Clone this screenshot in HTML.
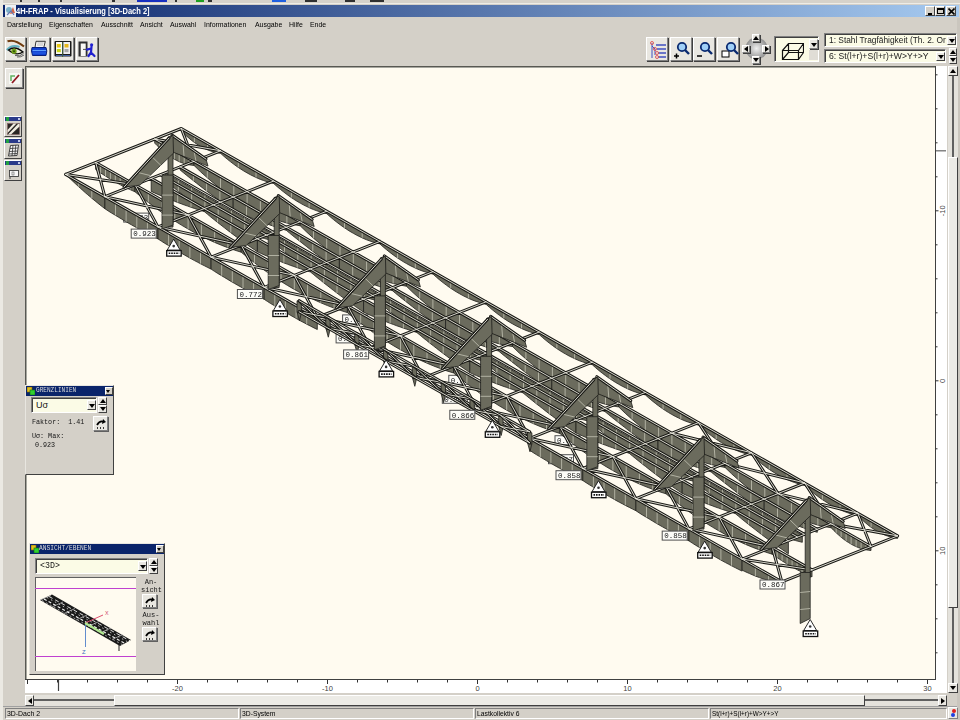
<!DOCTYPE html>
<html><head><meta charset="utf-8">
<style>
*{margin:0;padding:0;box-sizing:border-box}
html,body{width:960px;height:720px;overflow:hidden;background:#d4d0c8;font-family:"Liberation Sans",sans-serif;position:relative}
.a{position:absolute}
.sx{transform-origin:0 0;white-space:nowrap;filter:grayscale(1)}
#title{left:3px;top:5px;width:956px;height:12px;background:linear-gradient(to right,#0a246a 0%,#a6caf0 100%)}
#title .t{left:13px;top:0px;color:#fff;font-weight:bold;font-size:8.5px;line-height:12px;transform:scaleX(0.88)}
.wb{width:10px;height:10px;top:1px;background:#d4d0c8;border:1px solid;border-color:#fff #404040 #404040 #fff}
.menu{top:19px;font-size:8px;line-height:12px;color:#000;transform:scaleX(0.865)}
.btn{background:#e9e7e1;border:1px solid;border-color:#fff #808080 #808080 #fff;box-shadow:1px 1px 0 #404040}
.sunk{border:1px solid;border-color:#808080 #fff #fff #808080;box-shadow:inset 1px 1px 0 #404040}
#canvas{left:25px;top:66px;width:911px;height:614px;background:#fffbf0;border-top:1px solid;border-left:1px solid;border-color:#585852;overflow:hidden;box-shadow:inset 1px 1px 0 #a8a8a0}
.mono{filter:grayscale(1);font-family:"Liberation Mono",monospace}
.panel{background:#d4d0c8;border:1px solid;border-color:#e8e6e0 #404040 #404040 #e8e6e0}
.ptitle{background:#0a246a;color:#d8dce8;font-family:"Liberation Mono",monospace;font-size:7px;line-height:9px}
.arr{width:0;height:0;border-left:3px solid transparent;border-right:3px solid transparent}
.dn{border-top:4px solid #000}
.up{border-bottom:4px solid #000}
.lt{border:0;border-top:3px solid transparent;border-bottom:3px solid transparent;border-right:4px solid #000}
.rt{border:0;border-top:3px solid transparent;border-bottom:3px solid transparent;border-left:4px solid #000}
.stat{filter:grayscale(1);top:708px;height:11px;border:1px solid;border-color:#808080 #fff #fff #808080;font-size:7.5px;line-height:9px;color:#000;padding-left:1px}
</style></head><body>
<!-- top remnants -->
<div class="a" style="left:0;top:0;width:960px;height:4px;background:#d6d2ca"></div>
<div class="a" style="left:0;top:3px;width:960px;height:1px;background:#eeece6"></div>
<div class="a" style="left:0;top:0;width:3px;height:720px;background:#ebe9e3"></div>
<div class="a" style="left:957px;top:18px;width:3px;height:702px;background:#cac6be"></div>
<svg class="a" style="left:0;top:0" width="960" height="2">
  <g fill="#303030"><rect x="20" y="0" width="2" height="2"/><rect x="38" y="0" width="2" height="2"/><rect x="60" y="0" width="2" height="2"/><rect x="112" y="0" width="3" height="2"/><rect x="175" y="0" width="2" height="2"/><rect x="208" y="0" width="4" height="2"/><rect x="305" y="0" width="12" height="2"/><rect x="345" y="0" width="10" height="2"/><rect x="370" y="0" width="14" height="2"/></g>
  <rect x="137" y="0" width="30" height="2" fill="#1830c0"/><rect x="196" y="0" width="8" height="2" fill="#20a020"/><rect x="272" y="0" width="14" height="2" fill="#2060e0"/>
</svg>

<div id="title" class="a">
  <svg class="a" style="left:2px;top:0" width="11" height="12"><rect x="0" y="0" width="11" height="12" fill="#eef2f6"/><circle cx="4" cy="5" r="3" fill="#7ab0c8"/><path d="M5 9 L8 2 L10 8 Z" fill="#d86848"/><path d="M2 10 L6 6 L9 10" stroke="#6878b0" stroke-width="1.2" fill="none"/></svg>
  <div class="a t sx">4H-FRAP - Visualisierung [3D-Dach 2]</div>
  <div class="a wb" style="left:922px"><div class="a" style="left:2px;top:6px;width:4px;height:2px;background:#000"></div></div>
  <div class="a wb" style="left:932px"><div class="a" style="left:1px;top:1px;width:7px;height:6px;border:1px solid #000;border-top-width:2px"></div></div>
  <div class="a wb" style="left:943px"><svg class="a" style="left:1px;top:1px" width="7" height="7"><path d="M0.5 0.5 L6.5 6.5 M6.5 0.5 L0.5 6.5" stroke="#000" stroke-width="1.6"/></svg></div>
</div>

<div class="a menu sx" style="left:7px">Darstellung</div>
<div class="a menu sx" style="left:49px">Eigenschaften</div>
<div class="a menu sx" style="left:101px">Ausschnitt</div>
<div class="a menu sx" style="left:140px">Ansicht</div>
<div class="a menu sx" style="left:170px">Auswahl</div>
<div class="a menu sx" style="left:204px">Informationen</div>
<div class="a menu sx" style="left:255px">Ausgabe</div>
<div class="a menu sx" style="left:289px">Hilfe</div>
<div class="a menu sx" style="left:310px">Ende</div>

<!-- left toolbar buttons -->
<div class="a btn" style="left:5px;top:37px;width:21px;height:24px">
  <svg class="a" style="left:0px;top:0px" width="20" height="22"><path d="M1.5 3.2 Q9 0.8 18 8.6" stroke="#703c10" stroke-width="2" fill="none"/><path d="M0.8 12 Q6 6 13.5 9" stroke="#60b0c0" stroke-width="2.2" fill="none"/><path d="M2.5 12 Q9 7 17 14 Q10 18.5 2.5 12Z" fill="#f0f0dc" stroke="#0a0a0a" stroke-width="1.4"/><circle cx="8" cy="13.2" r="2.6" fill="#70a018"/><circle cx="8" cy="13.2" r="1" fill="#305008"/><path d="M9 17.5 Q14 19 17.5 15.5 M11 19 Q15 19.5 18 17" stroke="#505050" stroke-width="0.9" fill="none"/></svg>
</div>
<div class="a btn" style="left:29px;top:37px;width:21px;height:24px">
  <svg class="a" style="left:0px;top:0px" width="20" height="22"><path d="M6 3.3 L15.3 3.3 L13.8 9.5 L5 9.5Z" fill="#f6f6f6" stroke="#202020" stroke-width="0.9"/><path d="M7.5 5 L13.5 5 M7 7 L13 7" stroke="#909090" stroke-width="0.6"/><path d="M2 9.5 L16 9.5 L16.8 13 L16 17.5 L2.5 17.5 L1.5 13Z" fill="#1040d0" stroke="#08207a" stroke-width="1"/><path d="M2.5 12.5 L16 12.5" stroke="#60a0ff" stroke-width="1.1"/><path d="M2.5 15 L16 15" stroke="#3070f0" stroke-width="0.8"/></svg>
</div>
<div class="a btn" style="left:52px;top:37px;width:22px;height:24px">
  <svg class="a" style="left:0px;top:0px" width="21" height="22"><rect x="1.5" y="3" width="17" height="15.5" rx="1" fill="#1a1a1a"/><rect x="3" y="4" width="6" height="12" fill="#fafaf4"/><rect x="10.3" y="4" width="6.7" height="12" fill="#f0f0f0"/><rect x="3.8" y="6" width="4" height="3.5" fill="#e8c810"/><rect x="3.8" y="11" width="4" height="3.2" fill="#c8d418"/><rect x="11.5" y="6" width="4" height="3.5" fill="#e8b818"/><rect x="11.5" y="11" width="4" height="3.2" fill="#a8a8a8"/><path d="M3 17.5 H17" stroke="#4060a0" stroke-width="1"/><path d="M9.6 4 V19" stroke="#406040" stroke-width="1"/></svg>
</div>
<div class="a btn" style="left:76px;top:37px;width:22px;height:24px">
  <svg class="a" style="left:0px;top:0px" width="21" height="22"><rect x="1.5" y="3.5" width="9" height="15" fill="#303030"/><rect x="3.7" y="5.5" width="5" height="12.5" fill="#f8f8f4"/><path d="M6 11.4 H12" stroke="#404040" stroke-width="0.9"/><circle cx="14.6" cy="6.8" r="1.6" fill="#2020d0"/><path d="M14.5 8.5 L14 14.5 L11.5 18 M14 14.5 L17.5 18 M14.3 10.5 L10 11.6" stroke="#2020d0" stroke-width="2.2" fill="none" stroke-linecap="round"/></svg>
</div>

<!-- right toolbar -->
<div class="a btn" style="left:646px;top:37px;width:22px;height:24px">
  <svg class="a" style="left:1px;top:1px" width="20" height="21"><path d="M4 4 L4 19 M4 7 L7 10 L7 16" stroke="#4050c0" stroke-width="1" fill="none"/><g stroke="#4050c0" stroke-width="1.4"><path d="M8 6 L18 6 M9 10 L18 10 M10 14 L18 14 M10 18 L18 18"/></g><g fill="none" stroke="#e05050" stroke-width="0.9"><circle cx="4" cy="4" r="1.5"/><circle cx="7" cy="10" r="1.5"/><circle cx="9" cy="14" r="1.5"/><circle cx="9" cy="18" r="1.5"/></g></svg>
</div>
<div class="a btn" style="left:670px;top:37px;width:22px;height:24px">
  <svg class="a" style="left:1px;top:1px" width="20" height="21"><circle cx="10" cy="8" r="4.2" fill="#a0d0f8" stroke="#0a2a70" stroke-width="1.8"/><path d="M13 11 L17 15" stroke="#0a2a70" stroke-width="2.4"/><path d="M2 17 L7 17 M4.5 14.5 L4.5 19.5" stroke="#000" stroke-width="1.5"/></svg>
</div>
<div class="a btn" style="left:693px;top:37px;width:22px;height:24px">
  <svg class="a" style="left:1px;top:1px" width="20" height="21"><circle cx="10" cy="8" r="4.2" fill="#a0d0f8" stroke="#0a2a70" stroke-width="1.8"/><path d="M13 11 L17 15" stroke="#0a2a70" stroke-width="2.4"/><path d="M2 17 L7 17" stroke="#000" stroke-width="1.5"/></svg>
</div>
<div class="a btn" style="left:717px;top:37px;width:22px;height:24px">
  <svg class="a" style="left:1px;top:1px" width="20" height="21"><rect x="3" y="12" width="7" height="6" fill="#fff" stroke="#000" stroke-width="1"/><circle cx="12" cy="8" r="4.2" fill="#a0d0f8" stroke="#0a2a70" stroke-width="1.8"/><path d="M15 11 L19 15" stroke="#0a2a70" stroke-width="2.4"/></svg>
</div>
<!-- direction pad -->
<svg class="a" style="left:742px;top:33px" width="29" height="32">
  <defs><radialGradient id="pg" cx="0.5" cy="0.5" r="0.5"><stop offset="0" stop-color="#f0f0f0"/><stop offset="1" stop-color="#909090"/></radialGradient></defs>
  <circle cx="14.5" cy="15.5" r="11" fill="url(#pg)"/>
</svg>
<div class="a btn" style="left:752px;top:34px;width:8px;height:8px"><div class="a arr up" style="left:0px;top:1px;border-left-width:3px;border-right-width:3px"></div></div>
<div class="a btn" style="left:752px;top:56px;width:8px;height:8px"><div class="a arr dn" style="left:0px;top:1px"></div></div>
<div class="a btn" style="left:742px;top:45px;width:8px;height:8px"><div class="a arr lt" style="left:1px;top:0px"></div></div>
<div class="a btn" style="left:762px;top:45px;width:8px;height:8px"><div class="a arr rt" style="left:2px;top:0px"></div></div>
<!-- cube box -->
<div class="a sunk" style="left:774px;top:36px;width:45px;height:26px;background:#fbfbe6">
  <svg class="a" style="left:5px;top:3px" width="24" height="20"><path d="M2.5 10.5 L18.5 10.5 L18.5 19.5 L2.5 19.5 Z M2.5 10.5 L8.5 3.5 L23.5 3.5 L18.5 10.5 M23.5 3.5 L23.5 12.5 L18.5 19.5 M8.5 3.5 L8.5 12.5 L2.5 19.5 M8.5 12.5 L23.5 12.5" stroke="#111" stroke-width="1.2" fill="none"/></svg>
  <div class="a btn" style="left:34px;top:2px;width:9px;height:10px"><div class="a arr dn" style="left:1px;top:3px"></div></div>
  <div class="a" style="left:34px;top:13px;width:9px;height:10px;background:#e0ddd6"></div>
</div>
<!-- dropdowns -->
<div class="a sunk" style="left:824px;top:33px;width:133px;height:14px;background:#fbfbe6;overflow:hidden">
  <div class="a sx" style="left:4px;top:0px;font-size:9px;line-height:12px;color:#222;transform:scaleX(0.93)">1: Stahl Tragfähigkeit (Th. 2. Or</div>
  <div class="a btn" style="left:122px;top:2px;width:9px;height:9px;box-shadow:none;border-right-color:#404040;border-bottom-color:#404040"><div class="a arr dn" style="left:1px;top:2px"></div></div>
</div>
<div class="a sunk" style="left:824px;top:49px;width:122px;height:14px;background:#fbfbe6">
  <div class="a sx" style="left:4px;top:0px;font-size:9px;line-height:12px;color:#222;transform:scaleX(0.96)">6: St(l+r)+S(l+r)+W&gt;Y+&gt;Y</div>
  <div class="a btn" style="left:111px;top:2px;width:9px;height:9px;box-shadow:none;border-right-color:#404040;border-bottom-color:#404040"><div class="a arr dn" style="left:1px;top:2px"></div></div>
</div>
<div class="a btn" style="left:949px;top:48px;width:8px;height:8px;box-shadow:none;border-right-color:#404040;border-bottom-color:#404040"><div class="a arr up" style="left:0px;top:1px"></div></div>
<div class="a btn" style="left:949px;top:56px;width:8px;height:8px;box-shadow:none;border-right-color:#404040;border-bottom-color:#404040"><div class="a arr dn" style="left:0px;top:1px"></div></div>

<!-- left vertical toolbar -->
<div class="a btn" style="left:5px;top:68px;width:18px;height:20px">
  <svg class="a" style="left:1px;top:1px" width="15" height="17"><rect x="2" y="3" width="11" height="11" fill="#f6f8f4"/><path d="M4 11 L4 6 L8 6" stroke="#60b060" stroke-width="1.5" fill="none"/><path d="M5 13 L12 5" stroke="#901820" stroke-width="1.8"/></svg>
</div>
<div class="a" style="left:4px;top:116px;width:18px;height:21px;background:#d4d0c8;border:1px solid;border-color:#fff #404040 #404040 #fff">
  <div class="a" style="left:0;top:0;width:16px;height:4px;background:#2a3a8a"></div><div class="a" style="left:1px;top:0;width:3px;height:4px;background:#20a040"></div><div class="a" style="left:13px;top:1px;width:2px;height:2px;background:#c0c8e8"></div>
  <svg class="a" style="left:2px;top:6px" width="13" height="12"><rect x="0.5" y="0.5" width="12" height="11" fill="#2a2624" stroke="#806060" stroke-width="0.6"/><path d="M1 11.5 L11 1 L12.5 1 L12.5 3.5 L4 11.5Z M0.5 7 L6.5 0.5 L9.5 0.5 L0.5 10Z" fill="#f0ece0"/></svg>
</div>
<div class="a" style="left:4px;top:138px;width:18px;height:21px;background:#d4d0c8;border:1px solid;border-color:#fff #404040 #404040 #fff">
  <div class="a" style="left:0;top:0;width:16px;height:4px;background:#2a3a8a"></div><div class="a" style="left:1px;top:0;width:3px;height:4px;background:#20a040"></div><div class="a" style="left:13px;top:1px;width:2px;height:2px;background:#c0c8e8"></div>
  <svg class="a" style="left:2px;top:5px" width="13" height="13"><path d="M3.5 1.5 L11.5 1 L10 11.5 L1.5 12Z" fill="#fafafa" stroke="#303030" stroke-width="0.9"/><path d="M3 4.5 L11 4 M2.5 7.5 L10.5 7 M2 10 L10 9.5 M6 1.2 L5 12 M8.8 1.1 L7.8 11.8" stroke="#303030" stroke-width="0.8"/></svg>
</div>
<div class="a" style="left:4px;top:160px;width:18px;height:21px;background:#d4d0c8;border:1px solid;border-color:#fff #404040 #404040 #fff">
  <div class="a" style="left:0;top:0;width:16px;height:4px;background:#2a3a8a"></div><div class="a" style="left:1px;top:0;width:3px;height:4px;background:#20a040"></div><div class="a" style="left:13px;top:1px;width:2px;height:2px;background:#c0c8e8"></div>
  <svg class="a" style="left:2px;top:6px" width="13" height="12"><rect x="2.5" y="3.5" width="9" height="6" fill="#f8f8f8" stroke="#404040" stroke-width="0.9"/><path d="M3 10 L3 12" stroke="#404040"/><rect x="5" y="5" width="2" height="3" fill="none" stroke="#606060" stroke-width="0.6"/></svg>
</div>

<div id="canvas" class="a"><svg class="a" style="left:-26px;top:-67px" width="960" height="720"><style>#tr polygon{fill:#6b6b5d;stroke:#1e1e1a;stroke-width:0.8;stroke-linejoin:round} #tr .h{stroke:#d0d0c0;stroke-width:0.7;fill:none} #tr .mo{stroke:#1a1a16;stroke-width:3.0;fill:none;stroke-linecap:round} #tr .mi{stroke:#ecebe0;stroke-width:0.9;fill:none;stroke-linecap:round} #tr .lt{filter:grayscale(1);font-family:"Liberation Mono",monospace;font-size:7.5px;fill:#1a1a1a}</style><g id="tr">
<rect x="123.7" y="213.1" width="25" height="9" fill="#fcfcf8" stroke="#505050" stroke-width="1"/><text x="125.7" y="220.4" class="lt">0.893</text>
<rect x="342.6" y="314.9" width="25" height="9" fill="#fcfcf8" stroke="#505050" stroke-width="1"/><text x="344.6" y="322.2" class="lt">0.872</text>
<rect x="336.1" y="333.9" width="25" height="9" fill="#fcfcf8" stroke="#505050" stroke-width="1"/><text x="338.1" y="341.2" class="lt">0.871</text>
<rect x="448.8" y="375.3" width="25" height="9" fill="#fcfcf8" stroke="#505050" stroke-width="1"/><text x="450.8" y="382.6" class="lt">0.868</text>
<rect x="442.3" y="394.3" width="25" height="9" fill="#fcfcf8" stroke="#505050" stroke-width="1"/><text x="444.3" y="401.6" class="lt">0.867</text>
<rect x="555.0" y="435.7" width="25" height="9" fill="#fcfcf8" stroke="#505050" stroke-width="1"/><text x="557.0" y="443.0" class="lt">0.892</text>
<rect x="548.5" y="454.7" width="25" height="9" fill="#fcfcf8" stroke="#505050" stroke-width="1"/><text x="550.5" y="462.0" class="lt">0.857</text>
<polygon points="181.3,128.5 183.8,129.9 186.2,131.3 188.7,132.7 191.1,134.1 193.6,135.5 196.0,136.9 198.5,138.3 200.9,139.7 203.4,141.1 205.9,142.5 208.3,143.9 210.8,145.3 213.2,146.7 215.7,148.1 218.1,149.5 220.6,150.8 220.6,153.3 218.1,153.0 215.7,152.5 213.2,151.9 210.8,151.1 208.3,150.2 205.9,149.2 203.4,148.0 200.9,146.7 198.5,145.2 196.0,143.6 193.6,141.9 191.1,140.0 188.7,137.9 186.2,135.8 183.8,133.5 181.3,131.0"/>
<path class="h" d="M194.4,135.9L194.4,142.4 M207.5,143.4L207.5,149.9"/>
<polygon points="220.6,150.8 223.9,152.7 227.2,154.6 230.6,156.5 233.9,158.4 237.2,160.3 240.5,162.2 243.8,164.1 247.1,165.9 250.5,167.8 253.8,169.7 257.1,171.6 260.4,173.5 263.7,175.4 267.1,177.3 270.4,179.2 273.7,181.0 273.7,183.5 270.4,182.7 267.1,181.7 263.7,180.6 260.4,179.4 257.1,178.0 253.8,176.4 250.5,174.8 247.1,172.9 243.8,171.0 240.5,168.9 237.2,166.7 233.9,164.3 230.6,161.8 227.2,159.1 223.9,156.3 220.6,153.3"/>
<path class="h" d="M238.3,160.9L238.3,167.4 M256.0,171.0L256.0,177.5"/>
<polygon points="273.7,181.0 277.0,182.9 280.3,184.8 283.7,186.7 287.0,188.6 290.3,190.5 293.6,192.4 296.9,194.3 300.2,196.1 303.6,198.0 306.9,199.9 310.2,201.8 313.5,203.7 316.8,205.6 320.2,207.5 323.5,209.4 326.8,211.2 326.8,213.7 323.5,212.9 320.2,211.9 316.8,210.8 313.5,209.6 310.2,208.2 306.9,206.6 303.6,205.0 300.2,203.1 296.9,201.2 293.6,199.1 290.3,196.9 287.0,194.5 283.7,192.0 280.3,189.3 277.0,186.5 273.7,183.5"/>
<path class="h" d="M291.4,191.1L291.4,197.6 M309.1,201.2L309.1,207.7"/>
<polygon points="326.8,211.2 330.1,213.1 333.4,215.0 336.8,216.9 340.1,218.8 343.4,220.7 346.7,222.6 350.0,224.5 353.3,226.3 356.7,228.2 360.0,230.1 363.3,232.0 366.6,233.9 369.9,235.8 373.3,237.7 376.6,239.6 379.9,241.4 379.9,243.9 376.6,243.1 373.3,242.1 369.9,241.0 366.6,239.8 363.3,238.4 360.0,236.8 356.7,235.2 353.3,233.3 350.0,231.4 346.7,229.3 343.4,227.1 340.1,224.7 336.8,222.2 333.4,219.5 330.1,216.7 326.8,213.7"/>
<path class="h" d="M344.5,221.3L344.5,227.8 M362.2,231.4L362.2,237.9"/>
<polygon points="379.9,241.4 383.2,243.3 386.5,245.2 389.9,247.1 393.2,249.0 396.5,250.9 399.8,252.8 403.1,254.7 406.4,256.5 409.8,258.4 413.1,260.3 416.4,262.2 419.7,264.1 423.0,266.0 426.4,267.9 429.7,269.8 433.0,271.6 433.0,274.1 429.7,273.3 426.4,272.3 423.0,271.2 419.7,270.0 416.4,268.6 413.1,267.0 409.8,265.4 406.4,263.5 403.1,261.6 399.8,259.5 396.5,257.3 393.2,254.9 389.9,252.4 386.5,249.7 383.2,246.9 379.9,243.9"/>
<path class="h" d="M397.6,251.5L397.6,258.0 M415.3,261.6L415.3,268.1"/>
<polygon points="433.0,271.6 436.3,273.5 439.6,275.4 443.0,277.3 446.3,279.2 449.6,281.1 452.9,283.0 456.2,284.9 459.5,286.7 462.9,288.6 466.2,290.5 469.5,292.4 472.8,294.3 476.1,296.2 479.5,298.1 482.8,300.0 486.1,301.8 486.1,304.3 482.8,303.5 479.5,302.5 476.1,301.4 472.8,300.2 469.5,298.8 466.2,297.2 462.9,295.6 459.5,293.7 456.2,291.8 452.9,289.7 449.6,287.5 446.3,285.1 443.0,282.6 439.6,279.9 436.3,277.1 433.0,274.1"/>
<path class="h" d="M450.7,281.7L450.7,288.2 M468.4,291.8L468.4,298.3"/>
<polygon points="486.1,301.8 489.4,303.7 492.7,305.6 496.1,307.5 499.4,309.4 502.7,311.3 506.0,313.2 509.3,315.1 512.6,316.9 516.0,318.8 519.3,320.7 522.6,322.6 525.9,324.5 529.2,326.4 532.6,328.3 535.9,330.2 539.2,332.0 539.2,334.5 535.9,333.7 532.6,332.7 529.2,331.6 525.9,330.4 522.6,329.0 519.3,327.4 516.0,325.8 512.6,323.9 509.3,322.0 506.0,319.9 502.7,317.7 499.4,315.3 496.1,312.8 492.7,310.1 489.4,307.3 486.1,304.3"/>
<path class="h" d="M503.8,311.9L503.8,318.4 M521.5,322.0L521.5,328.5"/>
<polygon points="539.2,332.0 542.5,333.9 545.8,335.8 549.2,337.7 552.5,339.6 555.8,341.5 559.1,343.4 562.4,345.3 565.7,347.1 569.1,349.0 572.4,350.9 575.7,352.8 579.0,354.7 582.3,356.6 585.7,358.5 589.0,360.4 592.3,362.2 592.3,364.7 589.0,363.9 585.7,362.9 582.3,361.8 579.0,360.6 575.7,359.2 572.4,357.6 569.1,356.0 565.7,354.1 562.4,352.2 559.1,350.1 555.8,347.9 552.5,345.5 549.2,343.0 545.8,340.3 542.5,337.5 539.2,334.5"/>
<path class="h" d="M556.9,342.1L556.9,348.6 M574.6,352.2L574.6,358.7"/>
<polygon points="592.3,362.2 595.6,364.1 598.9,366.0 602.3,367.9 605.6,369.8 608.9,371.7 612.2,373.6 615.5,375.5 618.8,377.3 622.2,379.2 625.5,381.1 628.8,383.0 632.1,384.9 635.4,386.8 638.8,388.7 642.1,390.6 645.4,392.4 645.4,394.9 642.1,394.1 638.8,393.1 635.4,392.0 632.1,390.8 628.8,389.4 625.5,387.8 622.2,386.2 618.8,384.3 615.5,382.4 612.2,380.3 608.9,378.1 605.6,375.7 602.3,373.2 598.9,370.5 595.6,367.7 592.3,364.7"/>
<path class="h" d="M610.0,372.3L610.0,378.8 M627.7,382.4L627.7,388.9"/>
<polygon points="645.4,392.4 648.7,394.3 652.0,396.2 655.4,398.1 658.7,400.0 662.0,401.9 665.3,403.8 668.6,405.7 671.9,407.5 675.3,409.4 678.6,411.3 681.9,413.2 685.2,415.1 688.5,417.0 691.9,418.9 695.2,420.8 698.5,422.6 698.5,425.1 695.2,424.3 691.9,423.3 688.5,422.2 685.2,421.0 681.9,419.6 678.6,418.0 675.3,416.4 671.9,414.5 668.6,412.6 665.3,410.5 662.0,408.3 658.7,405.9 655.4,403.4 652.0,400.7 648.7,397.9 645.4,394.9"/>
<path class="h" d="M663.1,402.5L663.1,409.0 M680.8,412.6L680.8,419.1"/>
<polygon points="698.5,422.6 701.8,424.5 705.1,426.4 708.5,428.3 711.8,430.2 715.1,432.1 718.4,434.0 721.7,435.9 725.0,437.7 728.4,439.6 731.7,441.5 735.0,443.4 738.3,445.3 741.6,447.2 745.0,449.1 748.3,451.0 751.6,452.8 751.6,455.3 748.3,454.5 745.0,453.5 741.6,452.4 738.3,451.2 735.0,449.8 731.7,448.2 728.4,446.6 725.0,444.7 721.7,442.8 718.4,440.7 715.1,438.5 711.8,436.1 708.5,433.6 705.1,430.9 701.8,428.1 698.5,425.1"/>
<path class="h" d="M716.2,432.7L716.2,439.2 M733.9,442.8L733.9,449.3"/>
<polygon points="751.6,452.8 754.9,454.7 758.2,456.6 761.6,458.5 764.9,460.4 768.2,462.3 771.5,464.2 774.8,466.1 778.1,467.9 781.5,469.8 784.8,471.7 788.1,473.6 791.4,475.5 794.7,477.4 798.1,479.3 801.4,481.2 804.7,483.0 804.7,485.5 801.4,484.7 798.1,483.7 794.7,482.6 791.4,481.4 788.1,480.0 784.8,478.4 781.5,476.8 778.1,474.9 774.8,473.0 771.5,470.9 768.2,468.7 764.9,466.3 761.6,463.8 758.2,461.1 754.9,458.3 751.6,455.3"/>
<path class="h" d="M769.3,462.9L769.3,469.4 M787.0,473.0L787.0,479.5"/>
<polygon points="804.7,483.0 808.0,484.9 811.3,486.8 814.7,488.7 818.0,490.6 821.3,492.5 824.6,494.4 827.9,496.3 831.2,498.1 834.6,500.0 837.9,501.9 841.2,503.8 844.5,505.7 847.8,507.6 851.2,509.5 854.5,511.4 857.8,513.2 857.8,515.7 854.5,514.9 851.2,513.9 847.8,512.8 844.5,511.6 841.2,510.2 837.9,508.6 834.6,507.0 831.2,505.1 827.9,503.2 824.6,501.1 821.3,498.9 818.0,496.5 814.7,494.0 811.3,491.3 808.0,488.5 804.7,485.5"/>
<path class="h" d="M822.4,493.1L822.4,499.6 M840.1,503.2L840.1,509.7"/>
<polygon points="857.8,513.2 860.3,514.7 862.8,516.1 865.3,517.5 867.8,518.9 870.2,520.3 872.7,521.7 875.2,523.2 877.7,524.6 880.2,526.0 882.7,527.4 885.2,528.8 887.7,530.2 890.2,531.7 892.6,533.1 895.1,534.5 897.6,535.9 897.6,538.4 895.1,538.0 892.6,537.5 890.2,536.9 887.7,536.1 885.2,535.2 882.7,534.1 880.2,532.9 877.7,531.6 875.2,530.1 872.7,528.5 870.2,526.7 867.8,524.8 865.3,522.7 862.8,520.5 860.3,518.2 857.8,515.7"/>
<path class="h" d="M871.1,520.8L871.1,527.3 M884.3,528.3L884.3,534.8"/>
<polygon points="154.7,139.1 157.1,140.5 159.6,141.9 162.1,143.2 164.5,144.6 167.0,146.0 169.4,147.4 171.9,148.8 174.3,150.2 176.8,151.6 179.2,153.0 181.7,154.4 184.2,155.8 186.6,157.2 189.1,158.6 191.5,160.0 194.0,161.4 194.0,165.4 191.5,165.2 189.1,164.8 186.6,164.3 184.2,163.6 181.7,162.7 179.2,161.7 176.8,160.5 174.3,159.2 171.9,157.8 169.4,156.1 167.0,154.3 164.5,152.4 162.1,150.3 159.6,148.0 157.1,145.6 154.7,143.1"/>
<path class="h" d="M159.6,141.9L159.6,148.0 M164.5,144.6L164.5,152.4 M169.4,147.4L169.4,156.1 M174.3,150.2L174.3,159.2 M179.2,153.0L179.2,161.7 M184.2,155.8L184.2,163.6 M189.1,158.6L189.1,164.8"/>
<polygon points="95.7,162.5 98.1,163.9 100.6,165.3 103.0,166.7 105.5,168.1 108.0,169.4 110.4,170.8 112.9,172.2 115.3,173.6 117.8,175.0 120.2,176.4 122.7,177.8 125.2,179.2 127.6,180.6 130.1,182.0 132.5,183.4 135.0,184.8 135.0,191.8 132.5,190.7 130.1,189.6 127.6,188.5 125.2,187.3 122.7,186.0 120.2,184.7 117.8,183.4 115.3,182.0 112.9,180.6 110.4,179.2 108.0,177.7 105.5,176.1 103.0,174.5 100.6,172.9 98.1,171.2 95.7,169.5"/>
<path class="h" d="M100.6,165.3L100.6,172.9 M105.5,168.1L105.5,176.1 M110.4,170.8L110.4,179.2 M115.3,173.6L115.3,182.0 M120.2,176.4L120.2,184.7 M125.2,179.2L125.2,187.3 M130.1,182.0L130.1,189.6"/>
<polygon points="194.0,161.4 200.6,165.2 207.3,169.0 213.9,172.7 220.5,176.5 227.2,180.3 233.8,184.1 240.4,187.8 247.1,191.6 253.7,195.4 260.4,199.2 267.0,202.9 273.6,206.7 280.3,210.5 286.9,214.3 293.5,218.0 300.2,221.8 300.2,225.8 293.5,224.6 286.9,223.1 280.3,221.2 273.6,219.0 267.0,216.4 260.4,213.5 253.7,210.2 247.1,206.6 240.4,202.7 233.8,198.4 227.2,193.7 220.5,188.8 213.9,183.4 207.3,177.8 200.6,171.8 194.0,165.4"/>
<path class="h" d="M207.3,169.0L207.3,177.8 M220.5,176.5L220.5,188.8 M233.8,184.1L233.8,198.4 M247.1,191.6L247.1,206.6 M260.4,199.2L260.4,213.5 M273.6,206.7L273.6,219.0 M286.9,214.3L286.9,223.1"/>
<polygon points="165.1,172.9 171.7,176.7 178.3,180.4 185.0,184.2 191.6,188.0 198.2,191.8 204.9,195.5 211.5,199.3 218.2,203.1 224.8,206.9 231.4,210.6 238.1,214.4 244.7,218.2 251.3,222.0 258.0,225.7 264.6,229.5 271.3,233.3 271.3,240.3 264.6,238.6 258.0,236.7 251.3,234.4 244.7,231.9 238.1,229.1 231.4,226.1 224.8,222.7 218.2,219.1 211.5,215.2 204.9,211.0 198.2,206.5 191.6,201.7 185.0,196.7 178.3,191.4 171.7,185.8 165.1,179.9"/>
<path class="h" d="M178.3,180.4L178.3,191.4 M191.6,188.0L191.6,201.7 M204.9,195.5L204.9,211.0 M218.2,203.1L218.2,219.1 M231.4,210.6L231.4,226.1 M244.7,218.2L244.7,231.9 M258.0,225.7L258.0,236.7"/>
<polygon points="135.0,184.8 141.6,188.6 148.3,192.4 154.9,196.1 161.5,199.9 168.2,203.7 174.8,207.5 181.4,211.2 188.1,215.0 194.7,218.8 201.4,222.6 208.0,226.3 214.6,230.1 221.3,233.9 227.9,237.7 234.5,241.4 241.2,245.2 241.2,252.2 234.5,250.1 227.9,247.7 221.3,245.2 214.6,242.4 208.0,239.4 201.4,236.1 194.7,232.7 188.1,229.0 181.4,225.1 174.8,221.0 168.2,216.7 161.5,212.2 154.9,207.4 148.3,202.4 141.6,197.2 135.0,191.8"/>
<path class="h" d="M148.3,192.4L148.3,202.4 M161.5,199.9L161.5,212.2 M174.8,207.5L174.8,221.0 M188.1,215.0L188.1,229.0 M201.4,222.6L201.4,236.1 M214.6,230.1L214.6,242.4 M227.9,237.7L227.9,247.7"/>
<polygon points="300.2,221.8 306.8,225.6 313.5,229.4 320.1,233.1 326.7,236.9 333.4,240.7 340.0,244.5 346.6,248.2 353.3,252.0 359.9,255.8 366.6,259.6 373.2,263.3 379.8,267.1 386.5,270.9 393.1,274.7 399.7,278.4 406.4,282.2 406.4,286.2 399.7,285.0 393.1,283.5 386.5,281.6 379.8,279.4 373.2,276.8 366.6,273.9 359.9,270.6 353.3,267.0 346.6,263.1 340.0,258.8 333.4,254.1 326.7,249.2 320.1,243.8 313.5,238.2 306.8,232.2 300.2,225.8"/>
<path class="h" d="M313.5,229.4L313.5,238.2 M326.7,236.9L326.7,249.2 M340.0,244.5L340.0,258.8 M353.3,252.0L353.3,267.0 M366.6,259.6L366.6,273.9 M379.8,267.1L379.8,279.4 M393.1,274.7L393.1,283.5"/>
<polygon points="271.3,233.3 277.9,237.1 284.5,240.8 291.2,244.6 297.8,248.4 304.4,252.2 311.1,255.9 317.7,259.7 324.4,263.5 331.0,267.3 337.6,271.0 344.3,274.8 350.9,278.6 357.5,282.4 364.2,286.1 370.8,289.9 377.5,293.7 377.5,300.7 370.8,299.0 364.2,297.1 357.5,294.8 350.9,292.3 344.3,289.5 337.6,286.5 331.0,283.1 324.4,279.5 317.7,275.6 311.1,271.4 304.4,266.9 297.8,262.1 291.2,257.1 284.5,251.8 277.9,246.2 271.3,240.3"/>
<path class="h" d="M284.5,240.8L284.5,251.8 M297.8,248.4L297.8,262.1 M311.1,255.9L311.1,271.4 M324.4,263.5L324.4,279.5 M337.6,271.0L337.6,286.5 M350.9,278.6L350.9,292.3 M364.2,286.1L364.2,297.1"/>
<polygon points="241.2,245.2 247.8,249.0 254.5,252.8 261.1,256.5 267.7,260.3 274.4,264.1 281.0,267.9 287.6,271.6 294.3,275.4 300.9,279.2 307.6,283.0 314.2,286.7 320.8,290.5 327.5,294.3 334.1,298.1 340.7,301.8 347.4,305.6 347.4,312.6 340.7,310.5 334.1,308.1 327.5,305.6 320.8,302.8 314.2,299.8 307.6,296.5 300.9,293.1 294.3,289.4 287.6,285.5 281.0,281.4 274.4,277.1 267.7,272.6 261.1,267.8 254.5,262.8 247.8,257.6 241.2,252.2"/>
<path class="h" d="M254.5,252.8L254.5,262.8 M267.7,260.3L267.7,272.6 M281.0,267.9L281.0,281.4 M294.3,275.4L294.3,289.4 M307.6,283.0L307.6,296.5 M320.8,290.5L320.8,302.8 M334.1,298.1L334.1,308.1"/>
<polygon points="406.4,282.2 413.0,286.0 419.7,289.8 426.3,293.5 432.9,297.3 439.6,301.1 446.2,304.9 452.8,308.6 459.5,312.4 466.1,316.2 472.8,320.0 479.4,323.7 486.0,327.5 492.7,331.3 499.3,335.1 505.9,338.8 512.6,342.6 512.6,346.6 505.9,345.4 499.3,343.9 492.7,342.0 486.0,339.8 479.4,337.2 472.8,334.3 466.1,331.0 459.5,327.4 452.8,323.5 446.2,319.2 439.6,314.5 432.9,309.6 426.3,304.2 419.7,298.6 413.0,292.6 406.4,286.2"/>
<path class="h" d="M419.7,289.8L419.7,298.6 M432.9,297.3L432.9,309.6 M446.2,304.9L446.2,319.2 M459.5,312.4L459.5,327.4 M472.8,320.0L472.8,334.3 M486.0,327.5L486.0,339.8 M499.3,335.1L499.3,343.9"/>
<polygon points="377.5,293.7 384.1,297.5 390.7,301.2 397.4,305.0 404.0,308.8 410.6,312.6 417.3,316.3 423.9,320.1 430.6,323.9 437.2,327.7 443.8,331.4 450.5,335.2 457.1,339.0 463.7,342.8 470.4,346.5 477.0,350.3 483.7,354.1 483.7,361.1 477.0,359.4 470.4,357.5 463.7,355.2 457.1,352.7 450.5,349.9 443.8,346.9 437.2,343.5 430.6,339.9 423.9,336.0 417.3,331.8 410.6,327.3 404.0,322.5 397.4,317.5 390.7,312.2 384.1,306.6 377.5,300.7"/>
<path class="h" d="M390.7,301.2L390.7,312.2 M404.0,308.8L404.0,322.5 M417.3,316.3L417.3,331.8 M430.6,323.9L430.6,339.9 M443.8,331.4L443.8,346.9 M457.1,339.0L457.1,352.7 M470.4,346.5L470.4,357.5"/>
<polygon points="347.4,305.6 354.0,309.4 360.7,313.2 367.3,316.9 373.9,320.7 380.6,324.5 387.2,328.3 393.8,332.0 400.5,335.8 407.1,339.6 413.8,343.4 420.4,347.1 427.0,350.9 433.7,354.7 440.3,358.5 446.9,362.2 453.6,366.0 453.6,373.0 446.9,370.9 440.3,368.5 433.7,366.0 427.0,363.2 420.4,360.2 413.8,356.9 407.1,353.5 400.5,349.8 393.8,345.9 387.2,341.8 380.6,337.5 373.9,333.0 367.3,328.2 360.7,323.2 354.0,318.0 347.4,312.6"/>
<path class="h" d="M360.7,313.2L360.7,323.2 M373.9,320.7L373.9,333.0 M387.2,328.3L387.2,341.8 M400.5,335.8L400.5,349.8 M413.8,343.4L413.8,356.9 M427.0,350.9L427.0,363.2 M440.3,358.5L440.3,368.5"/>
<polygon points="512.6,342.6 519.2,346.4 525.9,350.2 532.5,353.9 539.1,357.7 545.8,361.5 552.4,365.3 559.0,369.0 565.7,372.8 572.3,376.6 579.0,380.4 585.6,384.1 592.2,387.9 598.9,391.7 605.5,395.5 612.1,399.2 618.8,403.0 618.8,407.0 612.1,405.8 605.5,404.3 598.9,402.4 592.2,400.2 585.6,397.6 579.0,394.7 572.3,391.4 565.7,387.8 559.0,383.9 552.4,379.6 545.8,374.9 539.1,370.0 532.5,364.6 525.9,359.0 519.2,353.0 512.6,346.6"/>
<path class="h" d="M525.9,350.2L525.9,359.0 M539.1,357.7L539.1,370.0 M552.4,365.3L552.4,379.6 M565.7,372.8L565.7,387.8 M579.0,380.4L579.0,394.7 M592.2,387.9L592.2,400.2 M605.5,395.5L605.5,404.3"/>
<polygon points="483.7,354.1 490.3,357.9 496.9,361.6 503.6,365.4 510.2,369.2 516.8,373.0 523.5,376.7 530.1,380.5 536.8,384.3 543.4,388.1 550.0,391.8 556.7,395.6 563.3,399.4 569.9,403.2 576.6,406.9 583.2,410.7 589.9,414.5 589.9,421.5 583.2,419.8 576.6,417.9 569.9,415.6 563.3,413.1 556.7,410.3 550.0,407.3 543.4,403.9 536.8,400.3 530.1,396.4 523.5,392.2 516.8,387.7 510.2,382.9 503.6,377.9 496.9,372.6 490.3,367.0 483.7,361.1"/>
<path class="h" d="M496.9,361.6L496.9,372.6 M510.2,369.2L510.2,382.9 M523.5,376.7L523.5,392.2 M536.8,384.3L536.8,400.3 M550.0,391.8L550.0,407.3 M563.3,399.4L563.3,413.1 M576.6,406.9L576.6,417.9"/>
<polygon points="453.6,366.0 460.2,369.8 466.9,373.6 473.5,377.3 480.1,381.1 486.8,384.9 493.4,388.7 500.0,392.4 506.7,396.2 513.3,400.0 520.0,403.8 526.6,407.5 533.2,411.3 539.9,415.1 546.5,418.9 553.1,422.6 559.8,426.4 559.8,433.4 553.1,431.3 546.5,428.9 539.9,426.4 533.2,423.6 526.6,420.6 520.0,417.3 513.3,413.9 506.7,410.2 500.0,406.3 493.4,402.2 486.8,397.9 480.1,393.4 473.5,388.6 466.9,383.6 460.2,378.4 453.6,373.0"/>
<path class="h" d="M466.9,373.6L466.9,383.6 M480.1,381.1L480.1,393.4 M493.4,388.7L493.4,402.2 M506.7,396.2L506.7,410.2 M520.0,403.8L520.0,417.3 M533.2,411.3L533.2,423.6 M546.5,418.9L546.5,428.9"/>
<polygon points="618.8,403.0 625.4,406.8 632.1,410.6 638.7,414.3 645.3,418.1 652.0,421.9 658.6,425.7 665.2,429.4 671.9,433.2 678.5,437.0 685.2,440.8 691.8,444.5 698.4,448.3 705.1,452.1 711.7,455.9 718.3,459.6 725.0,463.4 725.0,467.4 718.3,466.2 711.7,464.7 705.1,462.8 698.4,460.6 691.8,458.0 685.2,455.1 678.5,451.8 671.9,448.2 665.2,444.3 658.6,440.0 652.0,435.3 645.3,430.4 638.7,425.0 632.1,419.4 625.4,413.4 618.8,407.0"/>
<path class="h" d="M632.1,410.6L632.1,419.4 M645.3,418.1L645.3,430.4 M658.6,425.7L658.6,440.0 M671.9,433.2L671.9,448.2 M685.2,440.8L685.2,455.1 M698.4,448.3L698.4,460.6 M711.7,455.9L711.7,464.7"/>
<polygon points="589.9,414.5 596.5,418.3 603.1,422.0 609.8,425.8 616.4,429.6 623.0,433.4 629.7,437.1 636.3,440.9 643.0,444.7 649.6,448.5 656.2,452.2 662.9,456.0 669.5,459.8 676.1,463.6 682.8,467.3 689.4,471.1 696.1,474.9 696.1,481.9 689.4,480.2 682.8,478.3 676.1,476.0 669.5,473.5 662.9,470.7 656.2,467.7 649.6,464.3 643.0,460.7 636.3,456.8 629.7,452.6 623.0,448.1 616.4,443.3 609.8,438.3 603.1,433.0 596.5,427.4 589.9,421.5"/>
<path class="h" d="M603.1,422.0L603.1,433.0 M616.4,429.6L616.4,443.3 M629.7,437.1L629.7,452.6 M643.0,444.7L643.0,460.7 M656.2,452.2L656.2,467.7 M669.5,459.8L669.5,473.5 M682.8,467.3L682.8,478.3"/>
<polygon points="559.8,426.4 566.4,430.2 573.1,434.0 579.7,437.7 586.3,441.5 593.0,445.3 599.6,449.1 606.2,452.8 612.9,456.6 619.5,460.4 626.2,464.2 632.8,467.9 639.4,471.7 646.1,475.5 652.7,479.3 659.3,483.0 666.0,486.8 666.0,493.8 659.3,491.7 652.7,489.3 646.1,486.8 639.4,484.0 632.8,481.0 626.2,477.7 619.5,474.3 612.9,470.6 606.2,466.7 599.6,462.6 593.0,458.3 586.3,453.8 579.7,449.0 573.1,444.0 566.4,438.8 559.8,433.4"/>
<path class="h" d="M573.1,434.0L573.1,444.0 M586.3,441.5L586.3,453.8 M599.6,449.1L599.6,462.6 M612.9,456.6L612.9,470.6 M626.2,464.2L626.2,477.7 M639.4,471.7L639.4,484.0 M652.7,479.3L652.7,489.3"/>
<polygon points="725.0,463.4 731.6,467.2 738.3,471.0 744.9,474.7 751.5,478.5 758.2,482.3 764.8,486.1 771.4,489.8 778.1,493.6 784.7,497.4 791.4,501.2 798.0,504.9 804.6,508.7 811.3,512.5 817.9,516.3 824.5,520.0 831.2,523.8 831.2,527.8 824.5,526.6 817.9,525.1 811.3,523.2 804.6,521.0 798.0,518.4 791.4,515.5 784.7,512.2 778.1,508.6 771.4,504.7 764.8,500.4 758.2,495.7 751.5,490.8 744.9,485.4 738.3,479.8 731.6,473.8 725.0,467.4"/>
<path class="h" d="M738.3,471.0L738.3,479.8 M751.5,478.5L751.5,490.8 M764.8,486.1L764.8,500.4 M778.1,493.6L778.1,508.6 M791.4,501.2L791.4,515.5 M804.6,508.7L804.6,521.0 M817.9,516.3L817.9,525.1"/>
<polygon points="696.1,474.9 702.7,478.7 709.3,482.4 716.0,486.2 722.6,490.0 729.2,493.8 735.9,497.5 742.5,501.3 749.2,505.1 755.8,508.9 762.4,512.6 769.1,516.4 775.7,520.2 782.3,524.0 789.0,527.7 795.6,531.5 802.3,535.3 802.3,542.3 795.6,540.6 789.0,538.7 782.3,536.4 775.7,533.9 769.1,531.1 762.4,528.1 755.8,524.7 749.2,521.1 742.5,517.2 735.9,513.0 729.2,508.5 722.6,503.7 716.0,498.7 709.3,493.4 702.7,487.8 696.1,481.9"/>
<path class="h" d="M709.3,482.4L709.3,493.4 M722.6,490.0L722.6,503.7 M735.9,497.5L735.9,513.0 M749.2,505.1L749.2,521.1 M762.4,512.6L762.4,528.1 M775.7,520.2L775.7,533.9 M789.0,527.7L789.0,538.7"/>
<polygon points="666.0,486.8 672.6,490.6 679.3,494.4 685.9,498.1 692.5,501.9 699.2,505.7 705.8,509.5 712.4,513.2 719.1,517.0 725.7,520.8 732.4,524.6 739.0,528.3 745.6,532.1 752.3,535.9 758.9,539.7 765.5,543.4 772.2,547.2 772.2,554.2 765.5,552.1 758.9,549.7 752.3,547.2 745.6,544.4 739.0,541.4 732.4,538.1 725.7,534.7 719.1,531.0 712.4,527.1 705.8,523.0 699.2,518.7 692.5,514.2 685.9,509.4 679.3,504.4 672.6,499.2 666.0,493.8"/>
<path class="h" d="M679.3,494.4L679.3,504.4 M692.5,501.9L692.5,514.2 M705.8,509.5L705.8,523.0 M719.1,517.0L719.1,531.0 M732.4,524.6L732.4,538.1 M745.6,532.1L745.6,544.4 M758.9,539.7L758.9,549.7"/>
<polygon points="831.2,523.8 833.7,525.2 836.2,526.6 838.7,528.1 841.1,529.5 843.6,530.9 846.1,532.3 848.6,533.7 851.1,535.1 853.6,536.5 856.1,538.0 858.6,539.4 861.1,540.8 863.5,542.2 866.0,543.6 868.5,545.0 871.0,546.5 871.0,550.5 868.5,550.2 866.0,549.8 863.5,549.3 861.1,548.5 858.6,547.7 856.1,546.6 853.6,545.5 851.1,544.1 848.6,542.6 846.1,541.0 843.6,539.2 841.1,537.2 838.7,535.1 836.2,532.8 833.7,530.4 831.2,527.8"/>
<path class="h" d="M836.2,526.6L836.2,532.8 M841.1,529.5L841.1,537.2 M846.1,532.3L846.1,541.0 M851.1,535.1L851.1,544.1 M856.1,538.0L856.1,546.6 M861.1,540.8L861.1,548.5 M866.0,543.6L866.0,549.8"/>
<polygon points="772.2,547.2 774.7,548.6 777.2,550.0 779.6,551.5 782.1,552.9 784.6,554.3 787.1,555.7 789.6,557.1 792.1,558.5 794.6,560.0 797.1,561.4 799.6,562.8 802.0,564.2 804.5,565.6 807.0,567.0 809.5,568.4 812.0,569.9 812.0,576.9 809.5,575.8 807.0,574.6 804.5,573.5 802.0,572.3 799.6,571.0 797.1,569.7 794.6,568.3 792.1,566.9 789.6,565.5 787.1,564.0 784.6,562.5 782.1,560.9 779.6,559.3 777.2,557.7 774.7,556.0 772.2,554.2"/>
<path class="h" d="M777.2,550.0L777.2,557.7 M782.1,552.9L782.1,560.9 M787.1,555.7L787.1,564.0 M792.1,558.5L792.1,566.9 M797.1,561.4L797.1,569.7 M802.0,564.2L802.0,572.3 M807.0,567.0L807.0,574.6"/>
<polygon points="151.2,178.4 154.5,180.3 157.8,182.2 161.1,184.1 164.4,185.9 167.8,187.8 171.1,189.7 174.4,191.6 177.7,193.5 181.0,195.4 184.4,197.3 187.7,199.2 191.0,201.0 194.3,202.9 197.6,204.8 201.0,206.7 204.3,208.6 204.3,211.6 201.0,210.6 197.6,209.5 194.3,208.4 191.0,207.3 187.7,206.1 184.4,205.0 181.0,203.7 177.7,202.5 174.4,201.2 171.1,199.9 167.8,198.6 164.4,197.2 161.1,195.8 157.8,194.4 154.5,192.9 151.2,191.4"/>
<path class="h" d="M164.4,185.9L164.4,197.2 M177.7,193.5L177.7,202.5 M191.0,201.0L191.0,207.3"/>
<polygon points="180.1,166.9 183.4,168.8 186.7,170.7 190.1,172.6 193.4,174.5 196.7,176.4 200.0,178.2 203.3,180.1 206.6,182.0 210.0,183.9 213.3,185.8 216.6,187.7 219.9,189.6 223.2,191.5 226.6,193.3 229.9,195.2 233.2,197.1 233.2,210.1 229.9,207.8 226.6,205.5 223.2,203.2 219.9,200.8 216.6,198.4 213.3,196.0 210.0,193.5 206.6,191.0 203.3,188.5 200.0,185.9 196.7,183.3 193.4,180.7 190.1,178.1 186.7,175.4 183.4,172.7 180.1,169.9"/>
<path class="h" d="M193.4,174.5L193.4,180.7 M206.6,182.0L206.6,191.0 M219.9,189.6L219.9,200.8"/>
<polygon points="204.3,208.6 207.6,210.5 210.9,212.4 214.2,214.3 217.5,216.1 220.9,218.0 224.2,219.9 227.5,221.8 230.8,223.7 234.1,225.6 237.5,227.5 240.8,229.4 244.1,231.2 247.4,233.1 250.7,235.0 254.1,236.9 257.4,238.8 257.4,251.8 254.1,249.5 250.7,247.2 247.4,244.9 244.1,242.5 240.8,240.1 237.5,237.7 234.1,235.2 230.8,232.7 227.5,230.2 224.2,227.6 220.9,225.0 217.5,222.4 214.2,219.7 210.9,217.1 207.6,214.3 204.3,211.6"/>
<path class="h" d="M217.5,216.1L217.5,222.4 M230.8,223.7L230.8,232.7 M244.1,231.2L244.1,242.5"/>
<polygon points="233.2,197.1 236.5,199.0 239.8,200.9 243.2,202.8 246.5,204.7 249.8,206.6 253.1,208.4 256.4,210.3 259.7,212.2 263.1,214.1 266.4,216.0 269.7,217.9 273.0,219.8 276.3,221.7 279.7,223.5 283.0,225.4 286.3,227.3 286.3,230.3 283.0,229.3 279.7,228.2 276.3,227.1 273.0,226.0 269.7,224.9 266.4,223.7 263.1,222.5 259.7,221.2 256.4,219.9 253.1,218.6 249.8,217.3 246.5,215.9 243.2,214.5 239.8,213.1 236.5,211.6 233.2,210.1"/>
<path class="h" d="M246.5,204.7L246.5,215.9 M259.7,212.2L259.7,221.2 M273.0,219.8L273.0,226.0"/>
<polygon points="257.4,238.8 260.7,240.7 264.0,242.6 267.3,244.5 270.6,246.3 274.0,248.2 277.3,250.1 280.6,252.0 283.9,253.9 287.2,255.8 290.6,257.7 293.9,259.6 297.2,261.4 300.5,263.3 303.8,265.2 307.2,267.1 310.5,269.0 310.5,272.0 307.2,271.0 303.8,269.9 300.5,268.8 297.2,267.7 293.9,266.5 290.6,265.4 287.2,264.1 283.9,262.9 280.6,261.6 277.3,260.3 274.0,259.0 270.6,257.6 267.3,256.2 264.0,254.8 260.7,253.3 257.4,251.8"/>
<path class="h" d="M270.6,246.3L270.6,257.6 M283.9,253.9L283.9,262.9 M297.2,261.4L297.2,267.7"/>
<polygon points="286.3,227.3 289.6,229.2 292.9,231.1 296.3,233.0 299.6,234.9 302.9,236.8 306.2,238.6 309.5,240.5 312.8,242.4 316.2,244.3 319.5,246.2 322.8,248.1 326.1,250.0 329.4,251.9 332.8,253.7 336.1,255.6 339.4,257.5 339.4,270.5 336.1,268.2 332.8,265.9 329.4,263.6 326.1,261.2 322.8,258.8 319.5,256.4 316.2,253.9 312.8,251.4 309.5,248.9 306.2,246.3 302.9,243.7 299.6,241.1 296.3,238.5 292.9,235.8 289.6,233.1 286.3,230.3"/>
<path class="h" d="M299.6,234.9L299.6,241.1 M312.8,242.4L312.8,251.4 M326.1,250.0L326.1,261.2"/>
<polygon points="310.5,269.0 313.8,270.9 317.1,272.8 320.4,274.7 323.7,276.5 327.1,278.4 330.4,280.3 333.7,282.2 337.0,284.1 340.3,286.0 343.7,287.9 347.0,289.8 350.3,291.6 353.6,293.5 356.9,295.4 360.3,297.3 363.6,299.2 363.6,312.2 360.3,309.9 356.9,307.6 353.6,305.3 350.3,302.9 347.0,300.5 343.7,298.1 340.3,295.6 337.0,293.1 333.7,290.6 330.4,288.0 327.1,285.4 323.7,282.8 320.4,280.1 317.1,277.5 313.8,274.7 310.5,272.0"/>
<path class="h" d="M323.7,276.5L323.7,282.8 M337.0,284.1L337.0,293.1 M350.3,291.6L350.3,302.9"/>
<polygon points="339.4,257.5 342.7,259.4 346.0,261.3 349.4,263.2 352.7,265.1 356.0,267.0 359.3,268.8 362.6,270.7 365.9,272.6 369.3,274.5 372.6,276.4 375.9,278.3 379.2,280.2 382.5,282.1 385.9,283.9 389.2,285.8 392.5,287.7 392.5,290.7 389.2,289.7 385.9,288.6 382.5,287.5 379.2,286.4 375.9,285.3 372.6,284.1 369.3,282.9 365.9,281.6 362.6,280.3 359.3,279.0 356.0,277.7 352.7,276.3 349.4,274.9 346.0,273.5 342.7,272.0 339.4,270.5"/>
<path class="h" d="M352.7,265.1L352.7,276.3 M365.9,272.6L365.9,281.6 M379.2,280.2L379.2,286.4"/>
<polygon points="363.6,299.2 366.9,301.1 370.2,303.0 373.5,304.9 376.8,306.7 380.2,308.6 383.5,310.5 386.8,312.4 390.1,314.3 393.4,316.2 396.8,318.1 400.1,320.0 403.4,321.8 406.7,323.7 410.0,325.6 413.4,327.5 416.7,329.4 416.7,332.4 413.4,331.4 410.0,330.3 406.7,329.2 403.4,328.1 400.1,326.9 396.8,325.8 393.4,324.5 390.1,323.3 386.8,322.0 383.5,320.7 380.2,319.4 376.8,318.0 373.5,316.6 370.2,315.2 366.9,313.7 363.6,312.2"/>
<path class="h" d="M376.8,306.7L376.8,318.0 M390.1,314.3L390.1,323.3 M403.4,321.8L403.4,328.1"/>
<polygon points="392.5,287.7 395.8,289.6 399.1,291.5 402.5,293.4 405.8,295.3 409.1,297.2 412.4,299.0 415.7,300.9 419.0,302.8 422.4,304.7 425.7,306.6 429.0,308.5 432.3,310.4 435.6,312.3 439.0,314.1 442.3,316.0 445.6,317.9 445.6,330.9 442.3,328.6 439.0,326.3 435.6,324.0 432.3,321.6 429.0,319.2 425.7,316.8 422.4,314.3 419.0,311.8 415.7,309.3 412.4,306.7 409.1,304.1 405.8,301.5 402.5,298.9 399.1,296.2 395.8,293.5 392.5,290.7"/>
<path class="h" d="M405.8,295.3L405.8,301.5 M419.0,302.8L419.0,311.8 M432.3,310.4L432.3,321.6"/>
<polygon points="416.7,329.4 420.0,331.3 423.3,333.2 426.6,335.1 429.9,336.9 433.3,338.8 436.6,340.7 439.9,342.6 443.2,344.5 446.5,346.4 449.9,348.3 453.2,350.2 456.5,352.0 459.8,353.9 463.1,355.8 466.5,357.7 469.8,359.6 469.8,372.6 466.5,370.3 463.1,368.0 459.8,365.7 456.5,363.3 453.2,360.9 449.9,358.5 446.5,356.0 443.2,353.5 439.9,351.0 436.6,348.4 433.3,345.8 429.9,343.2 426.6,340.5 423.3,337.9 420.0,335.1 416.7,332.4"/>
<path class="h" d="M429.9,336.9L429.9,343.2 M443.2,344.5L443.2,353.5 M456.5,352.0L456.5,363.3"/>
<polygon points="445.6,317.9 448.9,319.8 452.2,321.7 455.6,323.6 458.9,325.5 462.2,327.4 465.5,329.2 468.8,331.1 472.1,333.0 475.5,334.9 478.8,336.8 482.1,338.7 485.4,340.6 488.7,342.5 492.1,344.3 495.4,346.2 498.7,348.1 498.7,351.1 495.4,350.1 492.1,349.0 488.7,347.9 485.4,346.8 482.1,345.7 478.8,344.5 475.5,343.3 472.1,342.0 468.8,340.7 465.5,339.4 462.2,338.1 458.9,336.7 455.6,335.3 452.2,333.9 448.9,332.4 445.6,330.9"/>
<path class="h" d="M458.9,325.5L458.9,336.7 M472.1,333.0L472.1,342.0 M485.4,340.6L485.4,346.8"/>
<polygon points="469.8,359.6 473.1,361.5 476.4,363.4 479.7,365.3 483.0,367.1 486.4,369.0 489.7,370.9 493.0,372.8 496.3,374.7 499.6,376.6 503.0,378.5 506.3,380.4 509.6,382.2 512.9,384.1 516.2,386.0 519.6,387.9 522.9,389.8 522.9,392.8 519.6,391.8 516.2,390.7 512.9,389.6 509.6,388.5 506.3,387.3 503.0,386.2 499.6,384.9 496.3,383.7 493.0,382.4 489.7,381.1 486.4,379.8 483.0,378.4 479.7,377.0 476.4,375.6 473.1,374.1 469.8,372.6"/>
<path class="h" d="M483.0,367.1L483.0,378.4 M496.3,374.7L496.3,383.7 M509.6,382.2L509.6,388.5"/>
<polygon points="498.7,348.1 502.0,350.0 505.3,351.9 508.7,353.8 512.0,355.7 515.3,357.6 518.6,359.4 521.9,361.3 525.2,363.2 528.6,365.1 531.9,367.0 535.2,368.9 538.5,370.8 541.8,372.7 545.2,374.5 548.5,376.4 551.8,378.3 551.8,391.3 548.5,389.0 545.2,386.7 541.8,384.4 538.5,382.0 535.2,379.6 531.9,377.2 528.6,374.7 525.2,372.2 521.9,369.7 518.6,367.1 515.3,364.5 512.0,361.9 508.7,359.3 505.3,356.6 502.0,353.9 498.7,351.1"/>
<path class="h" d="M512.0,355.7L512.0,361.9 M525.2,363.2L525.2,372.2 M538.5,370.8L538.5,382.0"/>
<polygon points="522.9,389.8 526.2,391.7 529.5,393.6 532.8,395.5 536.1,397.3 539.5,399.2 542.8,401.1 546.1,403.0 549.4,404.9 552.7,406.8 556.1,408.7 559.4,410.6 562.7,412.4 566.0,414.3 569.3,416.2 572.7,418.1 576.0,420.0 576.0,433.0 572.7,430.7 569.3,428.4 566.0,426.1 562.7,423.7 559.4,421.3 556.1,418.9 552.7,416.4 549.4,413.9 546.1,411.4 542.8,408.8 539.5,406.2 536.1,403.6 532.8,400.9 529.5,398.3 526.2,395.5 522.9,392.8"/>
<path class="h" d="M536.1,397.3L536.1,403.6 M549.4,404.9L549.4,413.9 M562.7,412.4L562.7,423.7"/>
<polygon points="551.8,378.3 555.1,380.2 558.4,382.1 561.8,384.0 565.1,385.9 568.4,387.8 571.7,389.6 575.0,391.5 578.3,393.4 581.7,395.3 585.0,397.2 588.3,399.1 591.6,401.0 594.9,402.9 598.3,404.7 601.6,406.6 604.9,408.5 604.9,411.5 601.6,410.5 598.3,409.4 594.9,408.3 591.6,407.2 588.3,406.1 585.0,404.9 581.7,403.7 578.3,402.4 575.0,401.1 571.7,399.8 568.4,398.5 565.1,397.1 561.8,395.7 558.4,394.3 555.1,392.8 551.8,391.3"/>
<path class="h" d="M565.1,385.9L565.1,397.1 M578.3,393.4L578.3,402.4 M591.6,401.0L591.6,407.2"/>
<polygon points="576.0,420.0 579.3,421.9 582.6,423.8 585.9,425.7 589.2,427.5 592.6,429.4 595.9,431.3 599.2,433.2 602.5,435.1 605.8,437.0 609.2,438.9 612.5,440.8 615.8,442.6 619.1,444.5 622.4,446.4 625.8,448.3 629.1,450.2 629.1,453.2 625.8,452.2 622.4,451.1 619.1,450.0 615.8,448.9 612.5,447.7 609.2,446.6 605.8,445.3 602.5,444.1 599.2,442.8 595.9,441.5 592.6,440.2 589.2,438.8 585.9,437.4 582.6,436.0 579.3,434.5 576.0,433.0"/>
<path class="h" d="M589.2,427.5L589.2,438.8 M602.5,435.1L602.5,444.1 M615.8,442.6L615.8,448.9"/>
<polygon points="604.9,408.5 608.2,410.4 611.5,412.3 614.9,414.2 618.2,416.1 621.5,418.0 624.8,419.8 628.1,421.7 631.4,423.6 634.8,425.5 638.1,427.4 641.4,429.3 644.7,431.2 648.0,433.1 651.4,434.9 654.7,436.8 658.0,438.7 658.0,451.7 654.7,449.4 651.4,447.1 648.0,444.8 644.7,442.4 641.4,440.0 638.1,437.6 634.8,435.1 631.4,432.6 628.1,430.1 624.8,427.5 621.5,424.9 618.2,422.3 614.9,419.7 611.5,417.0 608.2,414.3 604.9,411.5"/>
<path class="h" d="M618.2,416.1L618.2,422.3 M631.4,423.6L631.4,432.6 M644.7,431.2L644.7,442.4"/>
<polygon points="629.1,450.2 632.4,452.1 635.7,454.0 639.0,455.9 642.3,457.7 645.7,459.6 649.0,461.5 652.3,463.4 655.6,465.3 658.9,467.2 662.3,469.1 665.6,471.0 668.9,472.8 672.2,474.7 675.5,476.6 678.9,478.5 682.2,480.4 682.2,493.4 678.9,491.1 675.5,488.8 672.2,486.5 668.9,484.1 665.6,481.7 662.3,479.3 658.9,476.8 655.6,474.3 652.3,471.8 649.0,469.2 645.7,466.6 642.3,464.0 639.0,461.3 635.7,458.7 632.4,455.9 629.1,453.2"/>
<path class="h" d="M642.3,457.7L642.3,464.0 M655.6,465.3L655.6,474.3 M668.9,472.8L668.9,484.1"/>
<polygon points="658.0,438.7 661.3,440.6 664.6,442.5 668.0,444.4 671.3,446.3 674.6,448.2 677.9,450.0 681.2,451.9 684.5,453.8 687.9,455.7 691.2,457.6 694.5,459.5 697.8,461.4 701.1,463.3 704.5,465.1 707.8,467.0 711.1,468.9 711.1,471.9 707.8,470.9 704.5,469.8 701.1,468.7 697.8,467.6 694.5,466.5 691.2,465.3 687.9,464.1 684.5,462.8 681.2,461.5 677.9,460.2 674.6,458.9 671.3,457.5 668.0,456.1 664.6,454.7 661.3,453.2 658.0,451.7"/>
<path class="h" d="M671.3,446.3L671.3,457.5 M684.5,453.8L684.5,462.8 M697.8,461.4L697.8,467.6"/>
<polygon points="682.2,480.4 685.5,482.3 688.8,484.2 692.1,486.1 695.4,487.9 698.8,489.8 702.1,491.7 705.4,493.6 708.7,495.5 712.0,497.4 715.4,499.3 718.7,501.2 722.0,503.0 725.3,504.9 728.6,506.8 732.0,508.7 735.3,510.6 735.3,513.6 732.0,512.6 728.6,511.5 725.3,510.4 722.0,509.3 718.7,508.1 715.4,507.0 712.0,505.7 708.7,504.5 705.4,503.2 702.1,501.9 698.8,500.6 695.4,499.2 692.1,497.8 688.8,496.4 685.5,494.9 682.2,493.4"/>
<path class="h" d="M695.4,487.9L695.4,499.2 M708.7,495.5L708.7,504.5 M722.0,503.0L722.0,509.3"/>
<polygon points="711.1,468.9 714.4,470.8 717.7,472.7 721.1,474.6 724.4,476.5 727.7,478.4 731.0,480.2 734.3,482.1 737.6,484.0 741.0,485.9 744.3,487.8 747.6,489.7 750.9,491.6 754.2,493.5 757.6,495.3 760.9,497.2 764.2,499.1 764.2,512.1 760.9,509.8 757.6,507.5 754.2,505.2 750.9,502.8 747.6,500.4 744.3,498.0 741.0,495.5 737.6,493.0 734.3,490.5 731.0,487.9 727.7,485.3 724.4,482.7 721.1,480.1 717.7,477.4 714.4,474.7 711.1,471.9"/>
<path class="h" d="M724.4,476.5L724.4,482.7 M737.6,484.0L737.6,493.0 M750.9,491.6L750.9,502.8"/>
<polygon points="735.3,510.6 738.6,512.5 741.9,514.4 745.2,516.3 748.5,518.1 751.9,520.0 755.2,521.9 758.5,523.8 761.8,525.7 765.1,527.6 768.5,529.5 771.8,531.4 775.1,533.2 778.4,535.1 781.7,537.0 785.1,538.9 788.4,540.8 788.4,553.8 785.1,551.5 781.7,549.2 778.4,546.9 775.1,544.5 771.8,542.1 768.5,539.7 765.1,537.2 761.8,534.7 758.5,532.2 755.2,529.6 751.9,527.0 748.5,524.4 745.2,521.7 741.9,519.1 738.6,516.3 735.3,513.6"/>
<path class="h" d="M748.5,518.1L748.5,524.4 M761.8,525.7L761.8,534.7 M775.1,533.2L775.1,544.5"/>
<polygon points="764.2,499.1 767.5,501.0 770.8,502.9 774.2,504.8 777.5,506.7 780.8,508.6 784.1,510.4 787.4,512.3 790.7,514.2 794.1,516.1 797.4,518.0 800.7,519.9 804.0,521.8 807.3,523.7 810.7,525.5 814.0,527.4 817.3,529.3 817.3,532.3 814.0,531.3 810.7,530.2 807.3,529.1 804.0,528.0 800.7,526.9 797.4,525.7 794.1,524.5 790.7,523.2 787.4,521.9 784.1,520.6 780.8,519.3 777.5,517.9 774.2,516.5 770.8,515.1 767.5,513.6 764.2,512.1"/>
<path class="h" d="M777.5,506.7L777.5,517.9 M790.7,514.2L790.7,523.2 M804.0,521.8L804.0,528.0"/>
<polygon points="65.6,174.4 68.1,175.8 70.5,177.2 73.0,178.6 75.4,180.0 77.9,181.4 80.3,182.8 82.8,184.2 85.2,185.6 87.7,187.0 90.2,188.4 92.6,189.8 95.1,191.2 97.5,192.6 100.0,194.0 102.4,195.4 104.9,196.7 104.9,208.7 102.4,206.8 100.0,204.9 97.5,202.9 95.1,200.9 92.6,198.9 90.2,196.8 87.7,194.7 85.2,192.6 82.8,190.4 80.3,188.2 77.9,186.0 75.4,183.7 73.0,181.4 70.5,179.1 68.1,176.8 65.6,174.4"/>
<path class="h" d="M78.7,181.8L78.7,186.7 M91.8,189.3L91.8,198.2"/>
<polygon points="104.9,196.7 108.2,198.6 111.5,200.5 114.9,202.4 118.2,204.3 121.5,206.2 124.8,208.1 128.1,210.0 131.4,211.8 134.8,213.7 138.1,215.6 141.4,217.5 144.7,219.4 148.0,221.3 151.4,223.2 154.7,225.1 158.0,226.9 158.0,238.9 154.7,237.3 151.4,235.6 148.0,233.9 144.7,232.1 141.4,230.4 138.1,228.6 134.8,226.7 131.4,224.8 128.1,222.9 124.8,221.0 121.5,219.0 118.2,217.0 114.9,215.0 111.5,213.0 108.2,210.9 104.9,208.7"/>
<path class="h" d="M115.5,202.8L115.5,215.4 M126.1,208.8L126.1,221.8 M136.8,214.9L136.8,227.8 M147.4,220.9L147.4,233.5"/>
<polygon points="158.0,226.9 161.3,228.8 164.6,230.7 168.0,232.6 171.3,234.5 174.6,236.4 177.9,238.3 181.2,240.2 184.5,242.0 187.9,243.9 191.2,245.8 194.5,247.7 197.8,249.6 201.1,251.5 204.5,253.4 207.8,255.3 211.1,257.1 211.1,269.1 207.8,267.5 204.5,265.8 201.1,264.1 197.8,262.3 194.5,260.6 191.2,258.8 187.9,256.9 184.5,255.0 181.2,253.1 177.9,251.2 174.6,249.2 171.3,247.2 168.0,245.2 164.6,243.2 161.3,241.1 158.0,238.9"/>
<path class="h" d="M168.6,233.0L168.6,245.6 M179.2,239.0L179.2,252.0 M189.9,245.1L189.9,258.0 M200.5,251.1L200.5,263.7"/>
<polygon points="211.1,257.1 214.4,259.0 217.7,260.9 221.1,262.8 224.4,264.7 227.7,266.6 231.0,268.5 234.3,270.4 237.6,272.2 241.0,274.1 244.3,276.0 247.6,277.9 250.9,279.8 254.2,281.7 257.6,283.6 260.9,285.5 264.2,287.3 264.2,299.3 260.9,297.7 257.6,296.0 254.2,294.3 250.9,292.5 247.6,290.8 244.3,289.0 241.0,287.1 237.6,285.2 234.3,283.3 231.0,281.4 227.7,279.4 224.4,277.4 221.1,275.4 217.7,273.4 214.4,271.3 211.1,269.1"/>
<path class="h" d="M221.7,263.2L221.7,275.8 M232.3,269.2L232.3,282.2 M243.0,275.3L243.0,288.2 M253.6,281.3L253.6,293.9"/>
<polygon points="264.2,287.3 267.5,289.2 270.8,291.1 274.2,293.0 277.5,294.9 280.8,296.8 284.1,298.7 287.4,300.6 290.7,302.4 294.1,304.3 297.4,306.2 300.7,308.1 304.0,310.0 307.3,311.9 310.7,313.8 314.0,315.7 317.3,317.5 317.3,329.5 314.0,327.9 310.7,326.2 307.3,324.5 304.0,322.7 300.7,321.0 297.4,319.2 294.1,317.3 290.7,315.4 287.4,313.5 284.1,311.6 280.8,309.6 277.5,307.6 274.2,305.6 270.8,303.6 267.5,301.5 264.2,299.3"/>
<path class="h" d="M274.8,293.4L274.8,306.0 M285.4,299.4L285.4,312.4 M296.1,305.5L296.1,318.4 M306.7,311.5L306.7,324.1"/>
<polygon points="529.7,438.3 533.0,440.2 536.3,442.1 539.7,444.0 543.0,445.9 546.3,447.8 549.6,449.7 552.9,451.6 556.2,453.4 559.6,455.3 562.9,457.2 566.2,459.1 569.5,461.0 572.8,462.9 576.2,464.8 579.5,466.7 582.8,468.5 582.8,480.5 579.5,478.9 576.2,477.2 572.8,475.5 569.5,473.7 566.2,472.0 562.9,470.2 559.6,468.3 556.2,466.4 552.9,464.5 549.6,462.6 546.3,460.6 543.0,458.6 539.7,456.6 536.3,454.6 533.0,452.5 529.7,450.3"/>
<path class="h" d="M540.3,444.4L540.3,457.0 M550.9,450.4L550.9,463.4 M561.6,456.5L561.6,469.4 M572.2,462.5L572.2,475.1"/>
<polygon points="582.8,468.5 586.1,470.4 589.4,472.3 592.8,474.2 596.1,476.1 599.4,478.0 602.7,479.9 606.0,481.8 609.3,483.6 612.7,485.5 616.0,487.4 619.3,489.3 622.6,491.2 625.9,493.1 629.3,495.0 632.6,496.9 635.9,498.7 635.9,510.7 632.6,509.1 629.3,507.4 625.9,505.7 622.6,503.9 619.3,502.2 616.0,500.4 612.7,498.5 609.3,496.6 606.0,494.7 602.7,492.8 599.4,490.8 596.1,488.8 592.8,486.8 589.4,484.8 586.1,482.7 582.8,480.5"/>
<path class="h" d="M593.4,474.6L593.4,487.2 M604.0,480.6L604.0,493.6 M614.7,486.7L614.7,499.6 M625.3,492.7L625.3,505.3"/>
<polygon points="635.9,498.7 639.2,500.6 642.5,502.5 645.9,504.4 649.2,506.3 652.5,508.2 655.8,510.1 659.1,512.0 662.4,513.8 665.8,515.7 669.1,517.6 672.4,519.5 675.7,521.4 679.0,523.3 682.4,525.2 685.7,527.1 689.0,528.9 689.0,540.9 685.7,539.3 682.4,537.6 679.0,535.9 675.7,534.1 672.4,532.4 669.1,530.6 665.8,528.7 662.4,526.8 659.1,524.9 655.8,523.0 652.5,521.0 649.2,519.0 645.9,517.0 642.5,515.0 639.2,512.9 635.9,510.7"/>
<path class="h" d="M646.5,504.8L646.5,517.4 M657.1,510.8L657.1,523.8 M667.8,516.9L667.8,529.8 M678.4,522.9L678.4,535.5"/>
<polygon points="689.0,528.9 692.3,530.8 695.6,532.7 699.0,534.6 702.3,536.5 705.6,538.4 708.9,540.3 712.2,542.2 715.5,544.0 718.9,545.9 722.2,547.8 725.5,549.7 728.8,551.6 732.1,553.5 735.5,555.4 738.8,557.3 742.1,559.1 742.1,571.1 738.8,569.5 735.5,567.8 732.1,566.1 728.8,564.3 725.5,562.6 722.2,560.8 718.9,558.9 715.5,557.0 712.2,555.1 708.9,553.2 705.6,551.2 702.3,549.2 699.0,547.2 695.6,545.2 692.3,543.1 689.0,540.9"/>
<path class="h" d="M699.6,535.0L699.6,547.6 M710.2,541.0L710.2,554.0 M720.9,547.1L720.9,560.0 M731.5,553.1L731.5,565.7"/>
<polygon points="742.1,559.1 744.6,560.6 747.1,562.0 749.6,563.4 752.1,564.8 754.5,566.2 757.0,567.6 759.5,569.1 762.0,570.5 764.5,571.9 767.0,573.3 769.5,574.7 772.0,576.1 774.5,577.6 776.9,579.0 779.4,580.4 781.9,581.8 781.9,583.8 779.4,583.3 776.9,582.7 774.5,582.2 772.0,581.5 769.5,580.8 767.0,580.1 764.5,579.3 762.0,578.5 759.5,577.6 757.0,576.7 754.5,575.7 752.1,574.7 749.6,573.6 747.1,572.5 744.6,571.4 742.1,570.1"/>
<path class="h" d="M755.4,566.7L755.4,576.0 M768.6,574.2L768.6,580.6"/>
<path class="mo" d="M65.6,174.4L781.9,581.8 M95.7,162.5L812.0,569.9 M154.7,139.1L871.0,546.5 M181.3,128.5L897.6,535.9 M151.2,178.4L788.4,540.8 M160.4,174.7L797.6,537.1 M167.4,172.0L804.6,534.4 M180.1,166.9L817.3,529.3 M65.6,174.4L181.3,128.5 M104.9,196.7L220.6,150.8 M158.0,226.9L273.7,181.0 M211.1,257.1L326.8,211.2 M264.2,287.3L379.9,241.4 M317.3,317.5L433.0,271.6 M370.4,347.7L486.1,301.8 M423.5,377.9L539.2,332.0 M476.6,408.1L592.3,362.2 M529.7,438.3L645.4,392.4 M582.8,468.5L698.5,422.6 M635.9,498.7L751.6,452.8 M689.0,528.9L804.7,483.0 M742.1,559.1L857.8,513.2 M781.9,581.8L897.6,535.9 M65.6,174.4L135.0,184.8 M95.7,162.5L104.9,196.7 M104.9,196.7L188.1,215.0 M135.0,184.8L158.0,226.9 M158.0,226.9L241.2,245.2 M188.1,215.0L211.1,257.1 M211.1,257.1L294.3,275.4 M241.2,245.2L264.2,287.3 M264.2,287.3L347.4,305.6 M294.3,275.4L317.3,317.5 M317.3,317.5L400.5,335.8 M347.4,305.6L370.4,347.7 M370.4,347.7L453.6,366.0 M400.5,335.8L423.5,377.9 M423.5,377.9L506.7,396.2 M453.6,366.0L476.6,408.1 M476.6,408.1L559.8,426.4 M506.7,396.2L529.7,438.3 M529.7,438.3L612.9,456.6 M559.8,426.4L582.8,468.5 M582.8,468.5L666.0,486.8 M612.9,456.6L635.9,498.7 M635.9,498.7L719.1,517.0 M666.0,486.8L689.0,528.9 M689.0,528.9L772.2,547.2 M719.1,517.0L742.1,559.1 M742.1,559.1L812.0,569.9 M772.2,547.2L781.9,581.8 M154.7,139.1L220.6,150.8 M181.3,128.5L194.0,161.4 M831.2,523.8L897.6,535.9 M857.8,513.2L871.0,546.5 M778.1,493.6L857.8,513.2 M804.7,483.0L831.2,523.8 M725.0,463.4L804.7,483.0 M751.6,452.8L778.1,493.6 M671.9,433.2L751.6,452.8 M698.5,422.6L725.0,463.4"/><path class="mi" d="M65.6,174.4L781.9,581.8 M95.7,162.5L812.0,569.9 M154.7,139.1L871.0,546.5 M181.3,128.5L897.6,535.9 M151.2,178.4L788.4,540.8 M160.4,174.7L797.6,537.1 M167.4,172.0L804.6,534.4 M180.1,166.9L817.3,529.3 M65.6,174.4L181.3,128.5 M104.9,196.7L220.6,150.8 M158.0,226.9L273.7,181.0 M211.1,257.1L326.8,211.2 M264.2,287.3L379.9,241.4 M317.3,317.5L433.0,271.6 M370.4,347.7L486.1,301.8 M423.5,377.9L539.2,332.0 M476.6,408.1L592.3,362.2 M529.7,438.3L645.4,392.4 M582.8,468.5L698.5,422.6 M635.9,498.7L751.6,452.8 M689.0,528.9L804.7,483.0 M742.1,559.1L857.8,513.2 M781.9,581.8L897.6,535.9 M65.6,174.4L135.0,184.8 M95.7,162.5L104.9,196.7 M104.9,196.7L188.1,215.0 M135.0,184.8L158.0,226.9 M158.0,226.9L241.2,245.2 M188.1,215.0L211.1,257.1 M211.1,257.1L294.3,275.4 M241.2,245.2L264.2,287.3 M264.2,287.3L347.4,305.6 M294.3,275.4L317.3,317.5 M317.3,317.5L400.5,335.8 M347.4,305.6L370.4,347.7 M370.4,347.7L453.6,366.0 M400.5,335.8L423.5,377.9 M423.5,377.9L506.7,396.2 M453.6,366.0L476.6,408.1 M476.6,408.1L559.8,426.4 M506.7,396.2L529.7,438.3 M529.7,438.3L612.9,456.6 M559.8,426.4L582.8,468.5 M582.8,468.5L666.0,486.8 M612.9,456.6L635.9,498.7 M635.9,498.7L719.1,517.0 M666.0,486.8L689.0,528.9 M689.0,528.9L772.2,547.2 M719.1,517.0L742.1,559.1 M742.1,559.1L812.0,569.9 M772.2,547.2L781.9,581.8 M154.7,139.1L220.6,150.8 M181.3,128.5L194.0,161.4 M831.2,523.8L897.6,535.9 M857.8,513.2L871.0,546.5 M778.1,493.6L857.8,513.2 M804.7,483.0L831.2,523.8 M725.0,463.4L804.7,483.0 M751.6,452.8L778.1,493.6 M671.9,433.2L751.6,452.8 M698.5,422.6L725.0,463.4"/>
<polygon points="297.0,300.8 301.4,301.8 301.4,313.3 297.0,312.3"/>
<polygon points="297.2,312.3 301.2,313.3 299.5,320.8"/>
<polygon points="325.8,317.2 330.2,318.2 330.2,329.7 325.8,328.7"/>
<polygon points="326.0,328.7 330.0,329.7 328.3,337.2"/>
<path class="mo" d="M299.2,300.8L328.0,328.2 M299.2,311.8L328.0,317.2"/><path class="mi" d="M299.2,300.8L328.0,328.2 M299.2,311.8L328.0,317.2"/>
<polygon points="354.7,333.5 359.1,334.5 359.1,346.0 354.7,345.0"/>
<polygon points="354.9,345.0 358.9,346.0 357.2,353.5"/>
<path class="mo" d="M328.0,317.2L356.9,344.5 M328.0,328.2L356.9,333.5"/><path class="mi" d="M328.0,317.2L356.9,344.5 M328.0,328.2L356.9,333.5"/>
<polygon points="383.5,349.9 387.9,350.9 387.9,362.4 383.5,361.4"/>
<polygon points="383.7,361.4 387.7,362.4 386.0,369.9"/>
<path class="mo" d="M356.9,333.5L385.7,360.9 M356.9,344.5L385.7,349.9"/><path class="mi" d="M356.9,333.5L385.7,360.9 M356.9,344.5L385.7,349.9"/>
<polygon points="412.3,366.3 416.7,367.3 416.7,378.8 412.3,377.8"/>
<polygon points="412.5,377.8 416.5,378.8 414.8,386.3"/>
<path class="mo" d="M385.7,349.9L414.5,377.3 M385.7,360.9L414.5,366.3"/><path class="mi" d="M385.7,349.9L414.5,377.3 M385.7,360.9L414.5,366.3"/>
<polygon points="441.1,382.7 445.5,383.7 445.5,395.2 441.1,394.2"/>
<polygon points="441.3,394.2 445.3,395.2 443.6,402.7"/>
<path class="mo" d="M414.5,366.3L443.3,393.7 M414.5,377.3L443.3,382.7"/><path class="mi" d="M414.5,366.3L443.3,393.7 M414.5,377.3L443.3,382.7"/>
<polygon points="469.9,399.1 474.3,400.1 474.3,411.6 469.9,410.6"/>
<polygon points="470.1,410.6 474.1,411.6 472.4,419.1"/>
<path class="mo" d="M443.3,382.7L472.1,410.1 M443.3,393.7L472.1,399.1"/><path class="mi" d="M443.3,382.7L472.1,410.1 M443.3,393.7L472.1,399.1"/>
<polygon points="498.7,415.5 503.1,416.5 503.1,428.0 498.7,427.0"/>
<polygon points="498.9,427.0 502.9,428.0 501.2,435.5"/>
<path class="mo" d="M472.1,399.1L500.9,426.5 M472.1,410.1L500.9,415.5"/><path class="mi" d="M472.1,399.1L500.9,426.5 M472.1,410.1L500.9,415.5"/>
<polygon points="527.5,431.8 531.9,432.8 531.9,444.3 527.5,443.3"/>
<polygon points="527.7,443.3 531.7,444.3 530.0,451.8"/>
<path class="mo" d="M500.9,415.5L529.7,442.8 M500.9,426.5L529.7,431.8 M299.2,300.8L529.7,431.8 M299.2,311.8L529.7,442.8"/><path class="mi" d="M500.9,415.5L529.7,442.8 M500.9,426.5L529.7,431.8 M299.2,300.8L529.7,431.8 M299.2,311.8L529.7,442.8"/>
<polygon points="168.0,137.1 173.0,135.1 173.0,227.1 168.0,227.1"/>
<polygon points="162.0,175.1 173.0,175.1 173.0,225.1 162.0,229.1"/>
<path class="h" d="M162.0,195.1L173.0,195.1 M162.0,215.1L173.0,215.1"/>
<polygon points="274.2,197.5 279.2,195.5 279.2,287.5 274.2,287.5"/>
<polygon points="268.2,235.5 279.2,235.5 279.2,285.5 268.2,289.5"/>
<path class="h" d="M268.2,255.5L279.2,255.5 M268.2,275.5L279.2,275.5"/>
<polygon points="380.4,257.9 385.4,255.9 385.4,347.9 380.4,347.9"/>
<polygon points="374.4,295.9 385.4,295.9 385.4,345.9 374.4,349.9"/>
<path class="h" d="M374.4,315.9L385.4,315.9 M374.4,335.9L385.4,335.9"/>
<polygon points="486.6,318.3 491.6,316.3 491.6,408.3 486.6,408.3"/>
<polygon points="480.6,356.3 491.6,356.3 491.6,406.3 480.6,410.3"/>
<path class="h" d="M480.6,376.3L491.6,376.3 M480.6,396.3L491.6,396.3"/>
<polygon points="592.8,378.7 597.8,376.7 597.8,468.7 592.8,468.7"/>
<polygon points="586.8,416.7 597.8,416.7 597.8,466.7 586.8,470.7"/>
<path class="h" d="M586.8,436.7L597.8,436.7 M586.8,456.7L597.8,456.7"/>
<polygon points="699.0,439.1 704.0,437.1 704.0,529.1 699.0,529.1"/>
<polygon points="693.0,477.1 704.0,477.1 704.0,527.1 693.0,531.1"/>
<path class="h" d="M693.0,497.1L704.0,497.1 M693.0,517.1L704.0,517.1"/>
<polygon points="805.2,499.5 810.2,497.5 810.2,577.5 805.2,577.5"/>
<polygon points="800.2,572.5 810.2,572.5 810.2,618.5 800.2,623.5"/>
<path class="h" d="M800.2,592.5L810.2,591.5 M800.2,609.5L810.2,608.5"/>
<polygon points="172.0,135.1 206.0,159.1 208.0,166.1 173.0,152.1"/>
<path class="h" d="M183.0,143.1L184.0,156.1 M194.0,151.1L196.0,161.1"/>
<path class="mo" d="M172.0,135.1L206.0,159.1"/><path class="mi" d="M172.0,135.1L206.0,159.1"/>
<polygon points="124.0,187.1 169.0,138.1 173.0,135.1 173.5,153.1 140.0,185.1"/>
<path class="h" d="M137.5,172.4L150.1,175.5 M151.9,156.7L160.8,165.3"/>
<path class="mo" d="M124.0,187.1L169.0,138.1"/><path class="mi" d="M124.0,187.1L169.0,138.1"/>
<polygon points="278.2,195.5 312.2,219.5 314.2,226.5 279.2,212.5"/>
<path class="h" d="M289.2,203.5L290.2,216.5 M300.2,211.5L302.2,221.5"/>
<path class="mo" d="M278.2,195.5L312.2,219.5"/><path class="mi" d="M278.2,195.5L312.2,219.5"/>
<polygon points="230.2,247.5 275.2,198.5 279.2,195.5 279.7,213.5 246.2,245.5"/>
<path class="h" d="M243.7,232.8L256.3,235.9 M258.1,217.1L267.0,225.7"/>
<path class="mo" d="M230.2,247.5L275.2,198.5"/><path class="mi" d="M230.2,247.5L275.2,198.5"/>
<polygon points="384.4,255.9 418.4,279.9 420.4,286.9 385.4,272.9"/>
<path class="h" d="M395.4,263.9L396.4,276.9 M406.4,271.9L408.4,281.9"/>
<path class="mo" d="M384.4,255.9L418.4,279.9"/><path class="mi" d="M384.4,255.9L418.4,279.9"/>
<polygon points="336.4,307.9 381.4,258.9 385.4,255.9 385.9,273.9 352.4,305.9"/>
<path class="h" d="M349.9,293.2L362.4,296.3 M364.3,277.5L373.2,286.1"/>
<path class="mo" d="M336.4,307.9L381.4,258.9"/><path class="mi" d="M336.4,307.9L381.4,258.9"/>
<polygon points="490.6,316.3 524.6,340.3 526.6,347.3 491.6,333.3"/>
<path class="h" d="M501.6,324.3L502.6,337.3 M512.6,332.3L514.6,342.3"/>
<path class="mo" d="M490.6,316.3L524.6,340.3"/><path class="mi" d="M490.6,316.3L524.6,340.3"/>
<polygon points="442.6,368.3 487.6,319.3 491.6,316.3 492.1,334.3 458.6,366.3"/>
<path class="h" d="M456.1,353.6L468.7,356.7 M470.5,337.9L479.4,346.5"/>
<path class="mo" d="M442.6,368.3L487.6,319.3"/><path class="mi" d="M442.6,368.3L487.6,319.3"/>
<polygon points="596.8,376.7 630.8,400.7 632.8,407.7 597.8,393.7"/>
<path class="h" d="M607.8,384.7L608.8,397.7 M618.8,392.7L620.8,402.7"/>
<path class="mo" d="M596.8,376.7L630.8,400.7"/><path class="mi" d="M596.8,376.7L630.8,400.7"/>
<polygon points="548.8,428.7 593.8,379.7 597.8,376.7 598.3,394.7 564.8,426.7"/>
<path class="h" d="M562.3,414.0L574.9,417.1 M576.7,398.3L585.6,406.9"/>
<path class="mo" d="M548.8,428.7L593.8,379.7"/><path class="mi" d="M548.8,428.7L593.8,379.7"/>
<polygon points="703.0,437.1 737.0,461.1 739.0,468.1 704.0,454.1"/>
<path class="h" d="M714.0,445.1L715.0,458.1 M725.0,453.1L727.0,463.1"/>
<path class="mo" d="M703.0,437.1L737.0,461.1"/><path class="mi" d="M703.0,437.1L737.0,461.1"/>
<polygon points="655.0,489.1 700.0,440.1 704.0,437.1 704.5,455.1 671.0,487.1"/>
<path class="h" d="M668.5,474.4L681.0,477.5 M682.9,458.7L691.8,467.3"/>
<path class="mo" d="M655.0,489.1L700.0,440.1"/><path class="mi" d="M655.0,489.1L700.0,440.1"/>
<polygon points="809.2,497.5 843.2,521.5 845.2,528.5 810.2,514.5"/>
<path class="h" d="M820.2,505.5L821.2,518.5 M831.2,513.5L833.2,523.5"/>
<path class="mo" d="M809.2,497.5L843.2,521.5"/><path class="mi" d="M809.2,497.5L843.2,521.5"/>
<polygon points="761.2,549.5 806.2,500.5 810.2,497.5 810.7,515.5 777.2,547.5"/>
<path class="h" d="M774.7,534.8L787.2,537.9 M789.1,519.1L798.0,527.7"/>
<path class="mo" d="M761.2,549.5L806.2,500.5"/><path class="mi" d="M761.2,549.5L806.2,500.5"/>
<path d="M173.7,239.1 L180.2,250.1 L167.2,250.1Z" fill="#fff" stroke="#111" stroke-width="0.9"/><circle cx="173.7" cy="246.1" r="1.3" fill="#333"/><rect x="166.7" y="250.6" width="14.5" height="5.5" fill="#fff" stroke="#111" stroke-width="1.3"/><path d="M168.7,253.3H179.2" stroke="#111" stroke-width="1.6" stroke-dasharray="1.6,0.9"/>
<path d="M279.9,299.5 L286.4,310.5 L273.4,310.5Z" fill="#fff" stroke="#111" stroke-width="0.9"/><circle cx="279.9" cy="306.5" r="1.3" fill="#333"/><rect x="272.9" y="311.0" width="14.5" height="5.5" fill="#fff" stroke="#111" stroke-width="1.3"/><path d="M274.9,313.7H285.4" stroke="#111" stroke-width="1.6" stroke-dasharray="1.6,0.9"/>
<path d="M386.1,359.9 L392.6,370.9 L379.6,370.9Z" fill="#fff" stroke="#111" stroke-width="0.9"/><circle cx="386.1" cy="366.9" r="1.3" fill="#333"/><rect x="379.1" y="371.4" width="14.5" height="5.5" fill="#fff" stroke="#111" stroke-width="1.3"/><path d="M381.1,374.1H391.6" stroke="#111" stroke-width="1.6" stroke-dasharray="1.6,0.9"/>
<path d="M492.3,420.3 L498.8,431.3 L485.8,431.3Z" fill="#fff" stroke="#111" stroke-width="0.9"/><circle cx="492.3" cy="427.3" r="1.3" fill="#333"/><rect x="485.3" y="431.8" width="14.5" height="5.5" fill="#fff" stroke="#111" stroke-width="1.3"/><path d="M487.3,434.5H497.8" stroke="#111" stroke-width="1.6" stroke-dasharray="1.6,0.9"/>
<path d="M598.5,480.7 L605.0,491.7 L592.0,491.7Z" fill="#fff" stroke="#111" stroke-width="0.9"/><circle cx="598.5" cy="487.7" r="1.3" fill="#333"/><rect x="591.5" y="492.2" width="14.5" height="5.5" fill="#fff" stroke="#111" stroke-width="1.3"/><path d="M593.5,494.9H604.0" stroke="#111" stroke-width="1.6" stroke-dasharray="1.6,0.9"/>
<path d="M704.7,541.1 L711.2,552.1 L698.2,552.1Z" fill="#fff" stroke="#111" stroke-width="0.9"/><circle cx="704.7" cy="548.1" r="1.3" fill="#333"/><rect x="697.7" y="552.6" width="14.5" height="5.5" fill="#fff" stroke="#111" stroke-width="1.3"/><path d="M699.7,555.3H710.2" stroke="#111" stroke-width="1.6" stroke-dasharray="1.6,0.9"/>
<path d="M810.2,619.5 L816.7,630.5 L803.7,630.5Z" fill="#fff" stroke="#111" stroke-width="0.9"/><circle cx="810.2" cy="626.5" r="1.3" fill="#333"/><rect x="803.2" y="631.0" width="14.5" height="5.5" fill="#fff" stroke="#111" stroke-width="1.3"/><path d="M805.2,633.7H815.7" stroke="#111" stroke-width="1.6" stroke-dasharray="1.6,0.9"/>
<rect x="131.2" y="229.1" width="25" height="9" fill="#fcfcf8" stroke="#505050" stroke-width="1"/><text x="133.2" y="236.4" class="lt">0.923</text>
<rect x="237.4" y="289.5" width="25" height="9" fill="#fcfcf8" stroke="#505050" stroke-width="1"/><text x="239.4" y="296.8" class="lt">0.772</text>
<rect x="343.6" y="349.9" width="25" height="9" fill="#fcfcf8" stroke="#505050" stroke-width="1"/><text x="345.6" y="357.2" class="lt">0.861</text>
<rect x="449.8" y="410.3" width="25" height="9" fill="#fcfcf8" stroke="#505050" stroke-width="1"/><text x="451.8" y="417.6" class="lt">0.866</text>
<rect x="556.0" y="470.7" width="25" height="9" fill="#fcfcf8" stroke="#505050" stroke-width="1"/><text x="558.0" y="478.0" class="lt">0.858</text>
<rect x="662.2" y="531.1" width="25" height="9" fill="#fcfcf8" stroke="#505050" stroke-width="1"/><text x="664.2" y="538.4" class="lt">0.858</text>
<rect x="760.0" y="580.0" width="25" height="9" fill="#fcfcf8" stroke="#505050" stroke-width="1"/><text x="762.0" y="587.3" class="lt">0.867</text>
</g></svg></div>


<!-- GRENZLINIEN panel -->
<div class="a panel" style="left:25px;top:385px;width:89px;height:90px">
  <div class="a ptitle" style="left:0;top:0;width:87px;height:10px">
    <svg class="a" style="left:1px;top:1px" width="8" height="8"><rect x="0" y="0" width="5" height="5" fill="#e0c020" stroke="#806000" stroke-width="0.6"/><rect x="3" y="3" width="5" height="5" fill="#30d030" stroke="#107010" stroke-width="0.6"/></svg>
    <div class="a sx" style="left:10px;top:0;transform:scaleX(0.87)">GRENZLINIEN</div>
    <div class="a" style="left:79px;top:1px;width:8px;height:8px;background:#d4d0c8;border:1px solid;border-color:#fff #404040 #404040 #fff"><div class="a arr dn" style="left:0px;top:2px;border-left-width:2.5px;border-right-width:2.5px;border-top-width:3px"></div></div>
  </div>
  <div class="a sunk" style="left:5px;top:11px;width:66px;height:16px;background:#fbfbe6">
    <div class="a" style="left:4px;top:2px;font-size:9px;line-height:10px;color:#151515">U&#963;</div>
    <div class="a btn" style="left:55px;top:2px;width:9px;height:10px;box-shadow:none;border-right-color:#404040;border-bottom-color:#404040"><div class="a arr dn" style="left:1px;top:3px"></div></div>
  </div>
  <div class="a btn" style="left:72px;top:11px;width:9px;height:8px;box-shadow:none;border-right-color:#404040;border-bottom-color:#404040"><div class="a arr up" style="left:0.5px;top:1px"></div></div>
  <div class="a btn" style="left:72px;top:19px;width:9px;height:8px;box-shadow:none;border-right-color:#404040;border-bottom-color:#404040"><div class="a arr dn" style="left:0.5px;top:1px"></div></div>
  <div class="a mono sx" style="left:6px;top:32px;font-size:7.3px;line-height:9px;color:#151515;transform:scaleX(0.92)">Faktor:&nbsp; 1.41</div>
  <div class="a btn" style="left:67px;top:30px;width:15px;height:15px;box-shadow:1px 1px 0 #606060">
    <svg class="a" style="left:1px;top:1px" width="12" height="12"><path d="M2 7 Q5 2 9 4" stroke="#000" stroke-width="1.8" fill="none"/><path d="M8 1 L11 4 L7 6Z" fill="#000"/><path d="M2 10 H3 M5 10 H6 M8 10 H9" stroke="#000" stroke-width="1.4"/></svg>
  </div>
  <div class="a mono sx" style="left:6px;top:46px;font-size:7.3px;line-height:9px;color:#151515;transform:scaleX(0.92)">U&#963;: Max:</div>
  <div class="a mono sx" style="left:9px;top:55px;font-size:7.3px;line-height:9px;color:#151515;transform:scaleX(0.92)">0.923</div>
</div>

<!-- ANSICHT/EBENEN panel -->
<div class="a panel" style="left:29px;top:543px;width:136px;height:132px">
  <div class="a ptitle" style="left:0;top:0;width:134px;height:10px">
    <svg class="a" style="left:1px;top:1px" width="8" height="8"><rect x="0" y="0" width="5" height="5" fill="#e0c020" stroke="#806000" stroke-width="0.6"/><rect x="3" y="3" width="5" height="5" fill="#30d030" stroke="#107010" stroke-width="0.6"/></svg>
    <div class="a sx" style="left:9px;top:0;transform:scaleX(0.89)">ANSICHT/EBENEN</div>
    <div class="a" style="left:126px;top:1px;width:8px;height:8px;background:#d4d0c8;border:1px solid;border-color:#fff #404040 #404040 #fff"><div class="a arr dn" style="left:0px;top:2px;border-left-width:2.5px;border-right-width:2.5px;border-top-width:3px"></div></div>
  </div>
  <div class="a sunk" style="left:5px;top:14px;width:113px;height:16px;background:#fbfbe6">
    <div class="a mono" style="left:4px;top:2px;font-size:8.3px;line-height:10px;color:#151515">&lt;3D&gt;</div>
    <div class="a btn" style="left:102px;top:2px;width:9px;height:10px;box-shadow:none;border-right-color:#404040;border-bottom-color:#404040"><div class="a arr dn" style="left:1px;top:3px"></div></div>
  </div>
  <div class="a btn" style="left:119px;top:14px;width:9px;height:8px;box-shadow:none;border-right-color:#404040;border-bottom-color:#404040"><div class="a arr up" style="left:0.5px;top:1px"></div></div>
  <div class="a btn" style="left:119px;top:22px;width:9px;height:8px;box-shadow:none;border-right-color:#404040;border-bottom-color:#404040"><div class="a arr dn" style="left:0.5px;top:1px"></div></div>
  <div class="a" style="left:5px;top:33px;width:101px;height:94px;background:#fffbf0;border-top:1px solid #606060;border-left:1px solid #606060">
    <svg class="a" style="left:-1px;top:-1px" width="102" height="95">
      <path d="M0 11.5 H101 M0 79.5 H101" stroke="#c040d0" stroke-width="1"/>
      <path d="M5 23 L17 17.5 L96 63 L85 69 Z" fill="#1a1a1a"/>
      <path d="M9 22 L90 66.5" stroke="#f4f4f4" stroke-width="1.1" stroke-dasharray="3,2.2"/>
      <path d="M12 20.5 L93 65" stroke="#e8e8e8" stroke-width="0.8" stroke-dasharray="1.5,3"/>
      <path d="M7 23.5 L88 68" stroke="#d8d8d8" stroke-width="0.7" stroke-dasharray="2,2.5"/>
      <path d="M14 19.5 L95 63.8" stroke="#f0f0f0" stroke-width="0.9" stroke-dasharray="4,3"/>
      <path d="M16 18.5 L5 23 M28 25 L17 30 M40 31.5 L29 36.5 M52 38 L41 43 M64 44.5 L53 49.5 M76 51 L65 56 M88 57.5 L77 62.5" stroke="#c8c8c8" stroke-width="0.7"/>
      <path d="M50.5 46 L50.5 70" stroke="#5080c8" stroke-width="0.9"/>
      <path d="M50 46 L68 38" stroke="#e05070" stroke-width="1"/>
      <path d="M50 46 L69 57" stroke="#b0e890" stroke-width="2.2"/>
      <text x="70" y="38" font-family="Liberation Mono" font-size="6" fill="#d05070">X</text>
      <text x="47" y="77" font-family="Liberation Mono" font-size="6" fill="#4070c0">Z</text>
      <path d="M84 67 L84 74" stroke="#202020" stroke-width="1"/>
    </svg>
  </div>
  <div class="a mono" style="left:111px;top:34px;font-size:7px;line-height:8px;color:#151515;text-align:center;width:20px">An-<br>sicht</div>
  <div class="a btn" style="left:112px;top:50px;width:15px;height:14px;box-shadow:1px 1px 0 #606060">
    <svg class="a" style="left:1px;top:1px" width="12" height="12"><path d="M2 7 Q5 2 9 4" stroke="#000" stroke-width="1.8" fill="none"/><path d="M8 1 L11 4 L7 6Z" fill="#000"/><path d="M2 10 H3 M5 10 H6 M8 10 H9" stroke="#000" stroke-width="1.4"/></svg>
  </div>
  <div class="a mono" style="left:111px;top:67px;font-size:7px;line-height:8px;color:#151515;text-align:center;width:20px">Aus-<br>wahl</div>
  <div class="a btn" style="left:112px;top:83px;width:15px;height:14px;box-shadow:1px 1px 0 #606060">
    <svg class="a" style="left:1px;top:1px" width="12" height="12"><path d="M2 7 Q5 2 9 4" stroke="#000" stroke-width="1.8" fill="none"/><path d="M8 1 L11 4 L7 6Z" fill="#000"/><path d="M2 10 H3 M5 10 H6 M8 10 H9" stroke="#000" stroke-width="1.4"/></svg>
  </div>
</div>

<!-- right ruler -->
<div class="a" style="left:936px;top:66px;width:11px;height:627px;background:#fff"></div>
<div class="a" style="left:935px;top:66px;width:1px;height:614px;background:#404040"></div>
<!-- bottom ruler -->
<div class="a" style="left:25px;top:680px;width:922px;height:13px;background:#fff"></div>
<div class="a" style="left:25px;top:679px;width:911px;height:1px;background:#404040"></div>

<svg class="a" style="left:0;top:678px" width="960" height="16">
<path d="M27.5 2V6 M57.5 2V4.5 M87.5 2V4.5 M117.5 2V4.5 M147.5 2V4.5 M177.5 2V6 M207.5 2V4.5 M237.5 2V4.5 M267.5 2V4.5 M297.5 2V4.5 M327.5 2V6 M357.5 2V4.5 M387.5 2V4.5 M417.5 2V4.5 M447.5 2V4.5 M477.5 2V6 M507.5 2V4.5 M537.5 2V4.5 M567.5 2V4.5 M597.5 2V4.5 M627.5 2V6 M657.5 2V4.5 M687.5 2V4.5 M717.5 2V4.5 M747.5 2V4.5 M777.5 2V6 M807.5 2V4.5 M837.5 2V4.5 M867.5 2V4.5 M897.5 2V4.5 M927.5 2V6" stroke="#303030" stroke-width="1"/>
<path d="M58.5 2V13" stroke="#404040" stroke-width="1.2"/>
<text x="177.5" y="13" text-anchor="middle" font-family="Liberation Sans" font-size="7.5" fill="#404040">-20</text>
<text x="327.5" y="13" text-anchor="middle" font-family="Liberation Sans" font-size="7.5" fill="#404040">-10</text>
<text x="477.5" y="13" text-anchor="middle" font-family="Liberation Sans" font-size="7.5" fill="#404040">0</text>
<text x="627.5" y="13" text-anchor="middle" font-family="Liberation Sans" font-size="7.5" fill="#404040">10</text>
<text x="777.5" y="13" text-anchor="middle" font-family="Liberation Sans" font-size="7.5" fill="#404040">20</text>
<text x="927.5" y="13" text-anchor="middle" font-family="Liberation Sans" font-size="7.5" fill="#404040">30</text>
</svg>
<svg class="a" style="left:934px;top:66px" width="14" height="614">
<path d="M1.5 8.8H3.5 M1.5 42.8H3.5 M1.5 76.8H3.5 M1.5 110.8H3.5 M1.5 144.8H4.5 M1.5 178.8H3.5 M1.5 212.8H3.5 M1.5 246.8H3.5 M1.5 280.8H3.5 M1.5 314.8H4.5 M1.5 348.8H3.5 M1.5 382.8H3.5 M1.5 416.8H3.5 M1.5 450.8H3.5 M1.5 484.8H4.5 M1.5 518.8H3.5 M1.5 552.8H3.5 M1.5 586.8H3.5" stroke="#303030" stroke-width="1"/>
<path d="M2 84.8H12" stroke="#707070" stroke-width="1.3"/>
<text transform="translate(10.5 144.8) rotate(-90)" x="0" y="0" text-anchor="middle" font-family="Liberation Sans" font-size="7.5" fill="#404040">-10</text>
<text transform="translate(10.5 314.8) rotate(-90)" x="0" y="0" text-anchor="middle" font-family="Liberation Sans" font-size="7.5" fill="#404040">0</text>
<text transform="translate(10.5 484.8) rotate(-90)" x="0" y="0" text-anchor="middle" font-family="Liberation Sans" font-size="7.5" fill="#404040">10</text>
</svg>
<!-- vertical scrollbar -->
<div class="a" style="left:948px;top:66px;width:10px;height:627px;background:#e4e2dc"></div>
<div class="a" style="left:952px;top:76px;width:2px;height:607px;background:#606060"></div>
<div class="a btn" style="left:948px;top:157px;width:10px;height:451px;box-shadow:none;background:#ecebe6;border-right-color:#404040;border-bottom-color:#404040"></div>
<div class="a btn" style="left:948px;top:66px;width:10px;height:10px;box-shadow:none;border-right-color:#404040;border-bottom-color:#404040"><div class="a arr up" style="left:1px;top:2px"></div></div>
<div class="a btn" style="left:948px;top:683px;width:10px;height:10px;box-shadow:none;border-right-color:#404040;border-bottom-color:#404040"><div class="a arr dn" style="left:1px;top:2px"></div></div>
<!-- horizontal scrollbar -->
<div class="a" style="left:25px;top:695px;width:922px;height:11px;background:#e4e2dc"></div>
<div class="a" style="left:33px;top:699px;width:905px;height:2px;background:#606060"></div>
<div class="a btn" style="left:114px;top:695px;width:751px;height:11px;box-shadow:none;background:#ecebe6;border-right-color:#404040;border-bottom-color:#404040"></div>
<div class="a btn" style="left:25px;top:695px;width:9px;height:11px;box-shadow:none;border-right-color:#404040;border-bottom-color:#404040"><div class="a arr lt" style="left:2px;top:2px"></div></div>
<div class="a btn" style="left:938px;top:695px;width:9px;height:11px;box-shadow:none;border-right-color:#404040;border-bottom-color:#404040"><div class="a arr rt" style="left:2px;top:2px"></div></div>

<!-- status bar -->
<div class="a" style="left:3px;top:706px;width:954px;height:14px;background:#d4d0c8"></div>
<div class="a" style="left:3px;top:706px;width:954px;height:1px;background:#a0a0a0"></div>
<div class="a stat" style="left:5px;width:234px"><div class="sx" style="transform:scaleX(0.92)">3D-Dach 2</div></div>
<div class="a stat" style="left:240px;width:234px"><div class="sx" style="transform:scaleX(0.9)">3D-System</div></div>
<div class="a stat" style="left:475px;width:234px"><div class="sx" style="transform:scaleX(0.9)">Lastkollektiv 6</div></div>
<div class="a stat" style="left:710px;width:237px"><div class="sx" style="transform:scaleX(0.85)">St(l+r)+S(l+r)+W&gt;Y+&gt;Y</div></div>
<div class="a btn" style="left:948px;top:707px;width:10px;height:12px;box-shadow:none"><div class="a" style="left:3px;top:1px;width:4px;height:4px;border-radius:2px;background:#e02020"></div><div class="a" style="left:2px;top:5px;width:4px;height:4px;border-radius:2px;background:#2040e0"></div></div>

</body></html>
